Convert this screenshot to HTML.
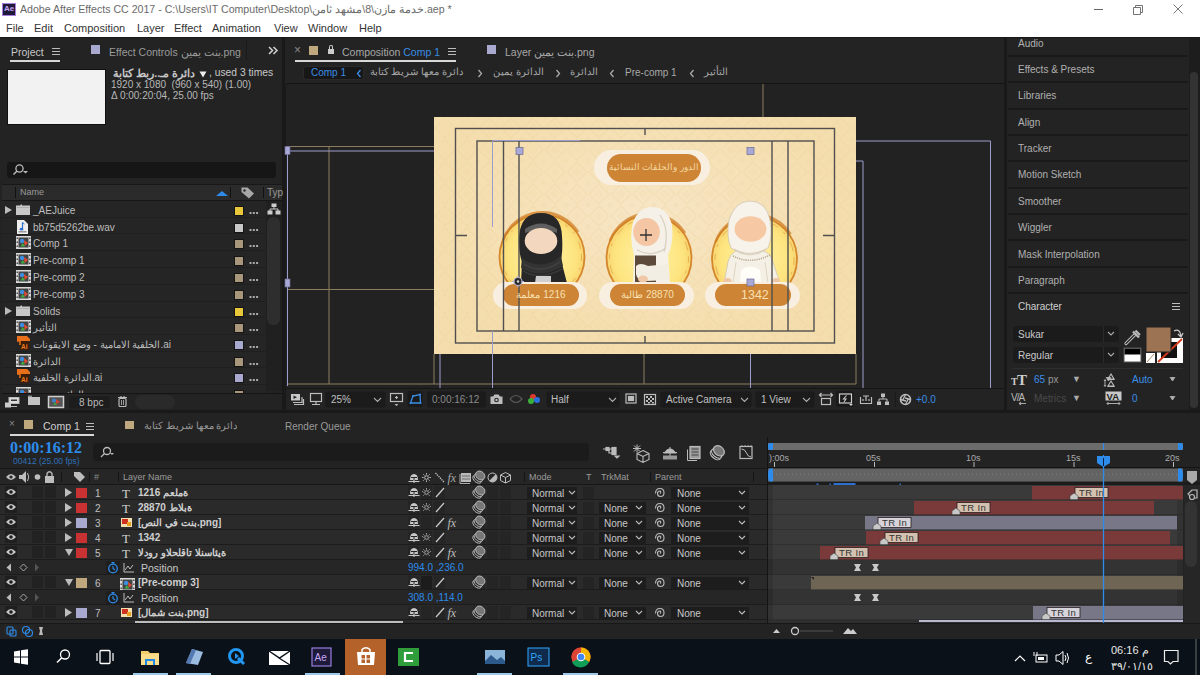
<!DOCTYPE html>
<html><head><meta charset="utf-8">
<style>
*{margin:0;padding:0;box-sizing:border-box}
html,body{width:1200px;height:675px;overflow:hidden;background:#191919;font-family:"Liberation Sans",sans-serif;font-size:11px;color:#b4b4b4}
.a{position:absolute}
.t{position:absolute;white-space:nowrap;line-height:1}
.panel{position:absolute;background:#232323}
</style></head><body>
<!-- title bar -->
<div class="a" style="left:0;top:0;width:1200px;height:37px;background:#fff"></div>
<div class="a" style="left:2px;top:3px;width:14px;height:13px;background:#1f1a3a;border:1px solid #a77dde"></div>
<div class="t" style="left:4px;top:5px;font-size:8px;color:#c9a7f7;font-weight:bold">Ae</div>
<div class="t" style="left:20px;top:4px;font-size:10.6px;color:#6a6a6a">Adobe After Effects CC 2017 - C:\Users\IT Computer\Desktop\<span style="unicode-bidi:isolate">مشهد ثامن</span>\8\<span style="unicode-bidi:isolate">خدمة مازن</span>.aep *</div>
<div class="t" style="left:6px;top:23px;font-size:11px;color:#333">File</div>
<div class="t" style="left:34px;top:23px;font-size:11px;color:#333">Edit</div>
<div class="t" style="left:64px;top:23px;font-size:11px;color:#333">Composition</div>
<div class="t" style="left:137px;top:23px;font-size:11px;color:#333">Layer</div>
<div class="t" style="left:174px;top:23px;font-size:11px;color:#333">Effect</div>
<div class="t" style="left:212px;top:23px;font-size:11px;color:#333">Animation</div>
<div class="t" style="left:274px;top:23px;font-size:11px;color:#333">View</div>
<div class="t" style="left:308px;top:23px;font-size:11px;color:#333">Window</div>
<div class="t" style="left:359px;top:23px;font-size:11px;color:#333">Help</div>
<!-- window controls -->
<svg class="a" style="left:1090px;top:2px" width="100" height="16"><path d="M4 7.5H13" stroke="#666" stroke-width="1"/><path d="M43.5 5.5H50.5V12.5H43.5Z M45.5 5.5V3.5H52.5V10.5H50.5" stroke="#666" fill="none" stroke-width=".9"/><path d="M83.5 2.5L92.5 11.5 M92.5 2.5L83.5 11.5" stroke="#666" stroke-width=".9"/></svg>



<!-- project panel -->
<div class="panel" style="left:0;top:38px;width:282px;height:372px"></div>

<!-- ===== PROJECT PANEL ===== -->
<div class="t" style="left:11px;top:47px;font-size:10.5px;color:#c8c8c8">Project</div>
<div class="a" style="left:52px;top:48px;width:8px;height:1px;background:#bbb;box-shadow:0 3px 0 #bbb,0 6px 0 #bbb"></div>
<div class="a" style="left:10px;top:60px;width:50px;height:2px;background:#d8d8d8"></div>
<div class="a" style="left:91px;top:45px;width:9px;height:9px;background:#a9a9d0"></div>
<div class="t" style="left:109px;top:47px;font-size:10.5px;color:#9a9a9a">Effect Controls بنت يمين.png</div>
<div class="a" style="left:246px;top:40px;width:1px;height:20px;background:#1a1a1a"></div>
<svg class="a" style="left:268px;top:46px" width="11" height="9"><path d="M1 1L4.5 4.5L1 8 M5.5 1L9 4.5L5.5 8" stroke="#ccc" stroke-width="1.6" fill="none"/></svg>
<div class="a" style="left:7px;top:69px;width:99px;height:56px;background:#f2f2f2;border:1px solid #111"></div>
<div class="t" style="left:111px;top:68px;width:84px;text-align:right;font-size:10.5px;color:#c8c8c8;font-weight:bold;direction:rtl">دائرة مـ..ربط كتابة</div><svg class="a" style="left:199px;top:71px" width="9" height="7"><path d="M0.5 0.5H7.5L4 6.5Z" fill="#eee"/></svg><div class="t" style="left:209px;top:68px;font-size:10.3px;color:#c8c8c8;white-space:pre">, used 3 times</div>
<div class="t" style="left:111px;top:80px;font-size:10px;color:#b8b8b8;white-space:pre">1920 x 1080  (960 x 540) (1.00)</div>
<div class="t" style="left:111px;top:91px;font-size:10px;color:#b8b8b8">Δ 0:00:20:04, 25.00 fps</div>
<div class="a" style="left:7px;top:162px;width:269px;height:16px;background:#161616;border-radius:3px"></div>
<svg class="a" style="left:12px;top:163px" width="20" height="14"><circle cx="7.5" cy="5.5" r="3.6" stroke="#bbb" stroke-width="1.3" fill="none"/><path d="M5 8L1.5 11.5" stroke="#bbb" stroke-width="1.4"/><path d="M11 8H16L13.5 10.5Z" fill="#bbb"/></svg>
<div class="a" style="left:2px;top:184px;width:280px;height:1px;background:#181818"></div>
<div class="a" style="left:2px;top:185px;width:264px;height:15px;background:#2b2b2b"></div>
<div class="a" style="left:266px;top:185px;width:16px;height:15px;background:#2b2b2b"></div>
<div class="a" style="left:15px;top:187px;width:1px;height:11px;background:#111"></div>
<div class="t" style="left:20px;top:188px;font-size:9px;color:#9a9a9a">Name</div>
<div class="a" style="left:216px;top:191px;width:0;height:0;border-left:6px solid transparent;border-right:6px solid transparent;border-bottom:5px solid #2d8ceb"></div>
<div class="a" style="left:230px;top:187px;width:1px;height:11px;background:#111"></div>
<svg class="a" style="left:240px;top:186px" width="16" height="13"><path d="M1.5 1.5H7.5L14 7.5L9 12.5L1.5 6Z" fill="#a8a8a8"/><circle cx="4.5" cy="4.5" r="1.2" fill="#2b2b2b"/></svg>
<div class="a" style="left:263px;top:187px;width:1px;height:11px;background:#111"></div>
<div class="t" style="left:267px;top:188px;font-size:10px;color:#9a9a9a">Typ</div>
<div class="a" style="left:2px;top:200px;width:280px;height:1px;background:#161616"></div>
<div class="a" style="left:2px;top:201px;width:264px;height:16px;background:#252525"></div><div class="a" style="left:2px;top:217px;width:264px;height:1px;background:#1f1f1f"></div><div class="a" style="left:5px;top:206px;width:0;height:0;border-top:4px solid transparent;border-bottom:4px solid transparent;border-left:7px solid #bbb"></div><svg class="a" style="left:16px;top:204px" width="14" height="11"><path d="M0 1.5H4L5 0.5H6V1.5H14V11H0Z" fill="#c8c8c8"/><path d="M0.5 3.5H13.5" stroke="#999" stroke-width=".6"/></svg><div class="t" style="left:33px;top:206px;font-size:10px;color:#bdbdbd">_AEJuice</div><div class="a" style="left:234px;top:206px;width:10px;height:10px;background:#e8c83a;border:1px solid #151515"></div><svg class="a" style="left:249px;top:212px" width="10" height="3"><rect x="0.5" y="0" width="2" height="2" fill="#aaa"/><rect x="3.8" y="0" width="2" height="2" fill="#aaa"/><rect x="7.1" y="0" width="2" height="2" fill="#aaa"/></svg><div class="a" style="left:2px;top:218px;width:264px;height:15px;background:#252525"></div><div class="a" style="left:2px;top:233px;width:264px;height:1px;background:#1f1f1f"></div><svg class="a" style="left:17px;top:220px" width="11" height="14"><path d="M0 0H7L11 4V14H0Z" fill="#eee"/><path d="M5.5 2.5V9" stroke="#2d6fd0" stroke-width="1.2"/><ellipse cx="4.5" cy="9.2" rx="1.8" ry="1.4" fill="#2d6fd0"/><path d="M5.5 2.5L7.5 4" stroke="#2d6fd0"/><rect x="1.5" y="11" width="8" height="1.5" fill="#999"/></svg><div class="t" style="left:33px;top:223px;font-size:10px;color:#bdbdbd">bb75d5262be.wav</div><div class="a" style="left:234px;top:223px;width:10px;height:10px;background:#c8c8c8;border:1px solid #151515"></div><svg class="a" style="left:249px;top:229px" width="10" height="3"><rect x="0.5" y="0" width="2" height="2" fill="#aaa"/><rect x="3.8" y="0" width="2" height="2" fill="#aaa"/><rect x="7.1" y="0" width="2" height="2" fill="#aaa"/></svg><div class="a" style="left:2px;top:234px;width:264px;height:16px;background:#252525"></div><div class="a" style="left:2px;top:250px;width:264px;height:1px;background:#1f1f1f"></div><svg class="a" style="left:16px;top:236px" width="15" height="13" viewBox="0 0 15 13"><rect x="0" y="0" width="15" height="13" fill="#d8d8d8"/><rect x="2.5" y="1.5" width="10" height="10" fill="#444"/><g fill="#333"><rect x="0.6" y="1.5" width="1.2" height="1.5"/><rect x="0.6" y="5.5" width="1.2" height="1.5"/><rect x="0.6" y="9.5" width="1.2" height="1.5"/><rect x="13.2" y="1.5" width="1.2" height="1.5"/><rect x="13.2" y="5.5" width="1.2" height="1.5"/><rect x="13.2" y="9.5" width="1.2" height="1.5"/></g><circle cx="6" cy="5" r="2.2" fill="#3d8de0"/><path d="M8 4L12 7L8.5 10Z" fill="#e04a30"/><path d="M4.5 10.5L6.8 7L9 10.5Z" fill="#3cb040"/></svg><div class="t" style="left:33px;top:239px;font-size:10px;color:#bdbdbd">Comp 1</div><div class="a" style="left:234px;top:239px;width:10px;height:10px;background:#a8977a;border:1px solid #151515"></div><svg class="a" style="left:249px;top:245px" width="10" height="3"><rect x="0.5" y="0" width="2" height="2" fill="#aaa"/><rect x="3.8" y="0" width="2" height="2" fill="#aaa"/><rect x="7.1" y="0" width="2" height="2" fill="#aaa"/></svg><div class="a" style="left:2px;top:251px;width:264px;height:16px;background:#252525"></div><div class="a" style="left:2px;top:267px;width:264px;height:1px;background:#1f1f1f"></div><svg class="a" style="left:16px;top:253px" width="15" height="13" viewBox="0 0 15 13"><rect x="0" y="0" width="15" height="13" fill="#d8d8d8"/><rect x="2.5" y="1.5" width="10" height="10" fill="#444"/><g fill="#333"><rect x="0.6" y="1.5" width="1.2" height="1.5"/><rect x="0.6" y="5.5" width="1.2" height="1.5"/><rect x="0.6" y="9.5" width="1.2" height="1.5"/><rect x="13.2" y="1.5" width="1.2" height="1.5"/><rect x="13.2" y="5.5" width="1.2" height="1.5"/><rect x="13.2" y="9.5" width="1.2" height="1.5"/></g><circle cx="6" cy="5" r="2.2" fill="#3d8de0"/><path d="M8 4L12 7L8.5 10Z" fill="#e04a30"/><path d="M4.5 10.5L6.8 7L9 10.5Z" fill="#3cb040"/></svg><div class="t" style="left:33px;top:256px;font-size:10px;color:#bdbdbd">Pre-comp 1</div><div class="a" style="left:234px;top:256px;width:10px;height:10px;background:#a8977a;border:1px solid #151515"></div><svg class="a" style="left:249px;top:262px" width="10" height="3"><rect x="0.5" y="0" width="2" height="2" fill="#aaa"/><rect x="3.8" y="0" width="2" height="2" fill="#aaa"/><rect x="7.1" y="0" width="2" height="2" fill="#aaa"/></svg><div class="a" style="left:2px;top:268px;width:264px;height:16px;background:#252525"></div><div class="a" style="left:2px;top:284px;width:264px;height:1px;background:#1f1f1f"></div><svg class="a" style="left:16px;top:270px" width="15" height="13" viewBox="0 0 15 13"><rect x="0" y="0" width="15" height="13" fill="#d8d8d8"/><rect x="2.5" y="1.5" width="10" height="10" fill="#444"/><g fill="#333"><rect x="0.6" y="1.5" width="1.2" height="1.5"/><rect x="0.6" y="5.5" width="1.2" height="1.5"/><rect x="0.6" y="9.5" width="1.2" height="1.5"/><rect x="13.2" y="1.5" width="1.2" height="1.5"/><rect x="13.2" y="5.5" width="1.2" height="1.5"/><rect x="13.2" y="9.5" width="1.2" height="1.5"/></g><circle cx="6" cy="5" r="2.2" fill="#3d8de0"/><path d="M8 4L12 7L8.5 10Z" fill="#e04a30"/><path d="M4.5 10.5L6.8 7L9 10.5Z" fill="#3cb040"/></svg><div class="t" style="left:33px;top:273px;font-size:10px;color:#bdbdbd">Pre-comp 2</div><div class="a" style="left:234px;top:273px;width:10px;height:10px;background:#a8977a;border:1px solid #151515"></div><svg class="a" style="left:249px;top:279px" width="10" height="3"><rect x="0.5" y="0" width="2" height="2" fill="#aaa"/><rect x="3.8" y="0" width="2" height="2" fill="#aaa"/><rect x="7.1" y="0" width="2" height="2" fill="#aaa"/></svg><div class="a" style="left:2px;top:285px;width:264px;height:16px;background:#252525"></div><div class="a" style="left:2px;top:301px;width:264px;height:1px;background:#1f1f1f"></div><svg class="a" style="left:16px;top:287px" width="15" height="13" viewBox="0 0 15 13"><rect x="0" y="0" width="15" height="13" fill="#d8d8d8"/><rect x="2.5" y="1.5" width="10" height="10" fill="#444"/><g fill="#333"><rect x="0.6" y="1.5" width="1.2" height="1.5"/><rect x="0.6" y="5.5" width="1.2" height="1.5"/><rect x="0.6" y="9.5" width="1.2" height="1.5"/><rect x="13.2" y="1.5" width="1.2" height="1.5"/><rect x="13.2" y="5.5" width="1.2" height="1.5"/><rect x="13.2" y="9.5" width="1.2" height="1.5"/></g><circle cx="6" cy="5" r="2.2" fill="#3d8de0"/><path d="M8 4L12 7L8.5 10Z" fill="#e04a30"/><path d="M4.5 10.5L6.8 7L9 10.5Z" fill="#3cb040"/></svg><div class="t" style="left:33px;top:290px;font-size:10px;color:#bdbdbd">Pre-comp 3</div><div class="a" style="left:234px;top:290px;width:10px;height:10px;background:#a8977a;border:1px solid #151515"></div><svg class="a" style="left:249px;top:296px" width="10" height="3"><rect x="0.5" y="0" width="2" height="2" fill="#aaa"/><rect x="3.8" y="0" width="2" height="2" fill="#aaa"/><rect x="7.1" y="0" width="2" height="2" fill="#aaa"/></svg><div class="a" style="left:2px;top:302px;width:264px;height:15px;background:#252525"></div><div class="a" style="left:2px;top:317px;width:264px;height:1px;background:#1f1f1f"></div><div class="a" style="left:5px;top:307px;width:0;height:0;border-top:4px solid transparent;border-bottom:4px solid transparent;border-left:7px solid #bbb"></div><svg class="a" style="left:16px;top:305px" width="14" height="11"><path d="M0 1.5H4L5 0.5H6V1.5H14V11H0Z" fill="#c8c8c8"/><path d="M0.5 3.5H13.5" stroke="#999" stroke-width=".6"/></svg><div class="t" style="left:33px;top:307px;font-size:10px;color:#bdbdbd">Solids</div><div class="a" style="left:234px;top:307px;width:10px;height:10px;background:#e8c83a;border:1px solid #151515"></div><svg class="a" style="left:249px;top:313px" width="10" height="3"><rect x="0.5" y="0" width="2" height="2" fill="#aaa"/><rect x="3.8" y="0" width="2" height="2" fill="#aaa"/><rect x="7.1" y="0" width="2" height="2" fill="#aaa"/></svg><div class="a" style="left:2px;top:318px;width:264px;height:16px;background:#252525"></div><div class="a" style="left:2px;top:334px;width:264px;height:1px;background:#1f1f1f"></div><svg class="a" style="left:16px;top:320px" width="15" height="13" viewBox="0 0 15 13"><rect x="0" y="0" width="15" height="13" fill="#d8d8d8"/><rect x="2.5" y="1.5" width="10" height="10" fill="#444"/><g fill="#333"><rect x="0.6" y="1.5" width="1.2" height="1.5"/><rect x="0.6" y="5.5" width="1.2" height="1.5"/><rect x="0.6" y="9.5" width="1.2" height="1.5"/><rect x="13.2" y="1.5" width="1.2" height="1.5"/><rect x="13.2" y="5.5" width="1.2" height="1.5"/><rect x="13.2" y="9.5" width="1.2" height="1.5"/></g><circle cx="6" cy="5" r="2.2" fill="#3d8de0"/><path d="M8 4L12 7L8.5 10Z" fill="#e04a30"/><path d="M4.5 10.5L6.8 7L9 10.5Z" fill="#3cb040"/></svg><div class="t" style="left:33px;top:323px;font-size:10px;color:#bdbdbd">التأثير</div><div class="a" style="left:234px;top:323px;width:10px;height:10px;background:#a8977a;border:1px solid #151515"></div><svg class="a" style="left:249px;top:329px" width="10" height="3"><rect x="0.5" y="0" width="2" height="2" fill="#aaa"/><rect x="3.8" y="0" width="2" height="2" fill="#aaa"/><rect x="7.1" y="0" width="2" height="2" fill="#aaa"/></svg><div class="a" style="left:2px;top:335px;width:264px;height:16px;background:#252525"></div><div class="a" style="left:2px;top:351px;width:264px;height:1px;background:#1f1f1f"></div><svg class="a" style="left:16px;top:336px" width="15" height="15"><path d="M1 0H11L14 3V5H1Z" fill="#e8701a"/><rect x="4" y="5" width="9" height="9" fill="#3a1c0a"/><path d="M1 5H4V9" stroke="#e8701a" stroke-width="1.5" fill="none"/><text x="5" y="12.5" font-family="Liberation Sans" font-size="6.5" font-weight="bold" fill="#f07a1a">Ai</text></svg><div class="t" style="left:33px;top:340px;font-size:10px;color:#bdbdbd">الخلفية الامامية - وضع  الايقونات.ai</div><div class="a" style="left:234px;top:340px;width:10px;height:10px;background:#a9a9d0;border:1px solid #151515"></div><svg class="a" style="left:249px;top:346px" width="10" height="3"><rect x="0.5" y="0" width="2" height="2" fill="#aaa"/><rect x="3.8" y="0" width="2" height="2" fill="#aaa"/><rect x="7.1" y="0" width="2" height="2" fill="#aaa"/></svg><div class="a" style="left:2px;top:352px;width:264px;height:15px;background:#252525"></div><div class="a" style="left:2px;top:367px;width:264px;height:1px;background:#1f1f1f"></div><svg class="a" style="left:16px;top:354px" width="15" height="13" viewBox="0 0 15 13"><rect x="0" y="0" width="15" height="13" fill="#d8d8d8"/><rect x="2.5" y="1.5" width="10" height="10" fill="#444"/><g fill="#333"><rect x="0.6" y="1.5" width="1.2" height="1.5"/><rect x="0.6" y="5.5" width="1.2" height="1.5"/><rect x="0.6" y="9.5" width="1.2" height="1.5"/><rect x="13.2" y="1.5" width="1.2" height="1.5"/><rect x="13.2" y="5.5" width="1.2" height="1.5"/><rect x="13.2" y="9.5" width="1.2" height="1.5"/></g><circle cx="6" cy="5" r="2.2" fill="#3d8de0"/><path d="M8 4L12 7L8.5 10Z" fill="#e04a30"/><path d="M4.5 10.5L6.8 7L9 10.5Z" fill="#3cb040"/></svg><div class="t" style="left:33px;top:357px;font-size:10px;color:#bdbdbd">الدائرة</div><div class="a" style="left:234px;top:357px;width:10px;height:10px;background:#a8977a;border:1px solid #151515"></div><svg class="a" style="left:249px;top:363px" width="10" height="3"><rect x="0.5" y="0" width="2" height="2" fill="#aaa"/><rect x="3.8" y="0" width="2" height="2" fill="#aaa"/><rect x="7.1" y="0" width="2" height="2" fill="#aaa"/></svg><div class="a" style="left:2px;top:368px;width:264px;height:16px;background:#252525"></div><div class="a" style="left:2px;top:384px;width:264px;height:1px;background:#1f1f1f"></div><svg class="a" style="left:16px;top:369px" width="15" height="15"><path d="M1 0H11L14 3V5H1Z" fill="#e8701a"/><rect x="4" y="5" width="9" height="9" fill="#3a1c0a"/><path d="M1 5H4V9" stroke="#e8701a" stroke-width="1.5" fill="none"/><text x="5" y="12.5" font-family="Liberation Sans" font-size="6.5" font-weight="bold" fill="#f07a1a">Ai</text></svg><div class="t" style="left:33px;top:373px;font-size:10px;color:#bdbdbd">الدائرة الخلفية.ai</div><div class="a" style="left:234px;top:373px;width:10px;height:10px;background:#a9a9d0;border:1px solid #151515"></div><svg class="a" style="left:249px;top:379px" width="10" height="3"><rect x="0.5" y="0" width="2" height="2" fill="#aaa"/><rect x="3.8" y="0" width="2" height="2" fill="#aaa"/><rect x="7.1" y="0" width="2" height="2" fill="#aaa"/></svg><div class="a" style="left:2px;top:385px;width:264px;height:16px;background:#252525"></div><div class="a" style="left:2px;top:401px;width:264px;height:1px;background:#1f1f1f"></div><svg class="a" style="left:16px;top:387px" width="15" height="13" viewBox="0 0 15 13"><rect x="0" y="0" width="15" height="13" fill="#d8d8d8"/><rect x="2.5" y="1.5" width="10" height="10" fill="#444"/><g fill="#333"><rect x="0.6" y="1.5" width="1.2" height="1.5"/><rect x="0.6" y="5.5" width="1.2" height="1.5"/><rect x="0.6" y="9.5" width="1.2" height="1.5"/><rect x="13.2" y="1.5" width="1.2" height="1.5"/><rect x="13.2" y="5.5" width="1.2" height="1.5"/><rect x="13.2" y="9.5" width="1.2" height="1.5"/></g><circle cx="6" cy="5" r="2.2" fill="#3d8de0"/><path d="M8 4L12 7L8.5 10Z" fill="#e04a30"/><path d="M4.5 10.5L6.8 7L9 10.5Z" fill="#3cb040"/></svg><div class="t" style="left:33px;top:390px;font-size:10px;color:#bdbdbd">الدائرة يمين</div><div class="a" style="left:234px;top:390px;width:10px;height:10px;background:#a8977a;border:1px solid #151515"></div><svg class="a" style="left:249px;top:396px" width="10" height="3"><rect x="0.5" y="0" width="2" height="2" fill="#aaa"/><rect x="3.8" y="0" width="2" height="2" fill="#aaa"/><rect x="7.1" y="0" width="2" height="2" fill="#aaa"/></svg><div class="a" style="left:266px;top:201px;width:16px;height:190px;background:#202020"></div><div class="a" style="left:267px;top:217px;width:13px;height:108px;background:#2e2e2e;border-radius:6px"></div><svg class="a" style="left:267px;top:203px" width="14" height="12"><rect x="4.5" y="0.5" width="5" height="3.5" fill="#ccc"/><rect x="0.5" y="7.5" width="5" height="4" fill="#ccc"/><rect x="8.5" y="7.5" width="5" height="4" fill="#ccc"/><path d="M7 4V6H3V8 M7 6H11V8" stroke="#ccc" fill="none"/></svg><div class="a" style="left:0;top:393px;width:282px;height:17px;background:#232323"></div>
<div class="a" style="left:2px;top:393px;width:280px;height:1px;background:#141414"></div>
<svg class="a" style="left:0;top:394px" width="282" height="16" viewBox="0 394 282 16">
 <rect x="9" y="397.5" width="10" height="6" fill="#ddd" stroke="#bbb"/><rect x="11" y="399.5" width="6" height="1.5" fill="#333"/>
 <path d="M5 402.5H11V407.5H5Z" fill="#ccc"/><path d="M11 406.5H17" stroke="#bbb"/>
 <rect x="28" y="397" width="12" height="8" fill="#c4c4c4"/><path d="M28 396.2H32" stroke="#c4c4c4"/>
 <rect x="48.5" y="396.5" width="15" height="11" fill="#555" stroke="#d0d0d0" stroke-width="1.5"/><circle cx="54" cy="400.5" r="2" fill="#3d80d0"/><path d="M56 399L60 402L56 404Z" fill="#d04030"/><path d="M53 405L55 402L57 405Z" fill="#40a040"/>
 <rect x="68.5" y="395.5" width="42" height="13.5" rx="3" fill="#1d1d1d" stroke="#262626"/>
 <path d="M118 397.5H127 M121 396V397.5 M124 396V397.5" stroke="#bbb" stroke-width="1.2"/><rect x="119" y="398.5" width="7" height="8" rx="1" fill="none" stroke="#bbb" stroke-width="1.2"/><path d="M121.5 400V405 M123.5 400V405" stroke="#bbb" stroke-width=".8"/>
 <rect x="135" y="395" width="40" height="14" rx="7" fill="#2a2a2a"/>
</svg>
<div class="t" style="left:79px;top:398px;font-size:10px;color:#bbb">8 bpc</div>

<!-- comp panel -->
<div class="panel" style="left:285px;top:38px;width:719px;height:372px"></div>

<!-- ===== COMP PANEL ===== -->
<div class="t" style="left:294px;top:44px;font-size:12px;color:#888">×</div>
<div class="a" style="left:309px;top:46px;width:9px;height:9px;background:#bfa77e"></div>
<div class="a" style="left:328px;top:49px;width:6px;height:5px;background:#ccc"></div>
<div class="a" style="left:329px;top:45px;width:4px;height:5px;border:1px solid #ccc;border-bottom:none;border-radius:2px 2px 0 0"></div>
<div class="t" style="left:342px;top:47px;font-size:10.5px;color:#a8a8a8">Composition <span style="color:#3a8ee6">Comp 1</span></div>
<div class="a" style="left:448px;top:48px;width:8px;height:1px;background:#bbb;box-shadow:0 3px 0 #bbb,0 6px 0 #bbb"></div>
<div class="a" style="left:295px;top:60px;width:161px;height:2px;background:#d8d8d8"></div>
<div class="a" style="left:487px;top:45px;width:9px;height:9px;background:#a9a9d0"></div>
<div class="t" style="left:505px;top:47px;font-size:10.5px;color:#a8a8a8">Layer بنت يمين.png</div>
<div class="a" style="left:286px;top:83px;width:718px;height:1px;background:#141414"></div>
<div class="a" style="left:303px;top:66px;width:61px;height:14px;background:#171717;border-radius:3px;border:1px solid #2a2a2a"></div>
<div class="t" style="left:311px;top:68px;font-size:10px;color:#3a8ee6">Comp 1</div>
<svg class="a" style="left:356px;top:69px" width="6" height="9"><path d="M4.5 1 L1.5 4.5 L4.5 8" stroke="#3a8ee6" stroke-width="1.3" fill="none"/></svg>
<div class="t" style="left:373px;top:67px;font-size:10px;color:#a8a8a8;width:90px;text-align:right;direction:rtl">دائرة معها شريط كتابة</div>
<svg class="a" style="left:477px;top:69px" width="6" height="9"><path d="M1.5 1 L4.5 4.5 L1.5 8" stroke="#aaa" stroke-width="1.3" fill="none"/></svg>
<div class="t" style="left:493px;top:67px;font-size:10px;color:#a8a8a8">الدائرة يمين</div>
<svg class="a" style="left:555px;top:69px" width="6" height="9"><path d="M1.5 1 L4.5 4.5 L1.5 8" stroke="#aaa" stroke-width="1.3" fill="none"/></svg>
<div class="t" style="left:570px;top:67px;font-size:10px;color:#a8a8a8">الدائرة</div>
<svg class="a" style="left:609px;top:69px" width="6" height="9"><path d="M4.5 1 L1.5 4.5 L4.5 8" stroke="#aaa" stroke-width="1.3" fill="none"/></svg>
<div class="t" style="left:625px;top:68px;font-size:10px;color:#a8a8a8">Pre-comp 1</div>
<svg class="a" style="left:689px;top:69px" width="6" height="9"><path d="M4.5 1 L1.5 4.5 L4.5 8" stroke="#aaa" stroke-width="1.3" fill="none"/></svg>
<div class="t" style="left:704px;top:67px;font-size:10px;color:#a8a8a8">التأثير</div>
<!-- viewer -->
<div class="a" style="left:285px;top:84px;width:719px;height:304px;background:#222222"></div>
<div class="a" style="left:285px;top:84px;width:1px;height:325px;background:#1a1a1a"></div>


<!-- ===== VIEWER CONTENT ===== -->
<div class="a" style="left:434px;top:117px;width:422px;height:237px;background:#f5deae;overflow:hidden">
  <div class="a" style="left:0;top:0;width:422px;height:237px;background:radial-gradient(ellipse 200px 120px at 211px 100px,#f7e6c6 0%,rgba(247,230,198,0) 100%)"></div>
  <svg class="a" style="left:0;top:0" width="422" height="237"><defs><pattern id="orn" width="22" height="22" patternUnits="userSpaceOnUse"><path d="M11 1L21 11L11 21L1 11Z" fill="none" stroke="#e9c990" stroke-width="1.3" opacity=".55"/><path d="M11 6L16 11L11 16L6 11Z" fill="#ecd09a" opacity=".35"/><circle cx="0" cy="0" r="2.5" fill="#ecd09a" opacity=".4"/><circle cx="22" cy="0" r="2.5" fill="#ecd09a" opacity=".4"/><circle cx="0" cy="22" r="2.5" fill="#ecd09a" opacity=".4"/><circle cx="22" cy="22" r="2.5" fill="#ecd09a" opacity=".4"/></pattern></defs><rect width="422" height="237" fill="url(#orn)" opacity=".42"/></svg>
</div>
<svg class="a" style="left:0;top:0" width="1200" height="675" viewBox="0 0 1200 675">

 <defs>
  <radialGradient id="cg" cx="50%" cy="50%" r="50%"><stop offset="0" stop-color="#fff2a8"/><stop offset=".8" stop-color="#fde47e"/><stop offset="1" stop-color="#f8d470"/></radialGradient>
 </defs>
 <g>
  <circle cx="542" cy="257" r="43" fill="url(#cg)"/>
  <circle cx="649" cy="258" r="43" fill="url(#cg)"/>
  <circle cx="754.5" cy="259" r="43" fill="url(#cg)"/>
  <g fill="none" stroke="#d07e24">
   <circle cx="542" cy="257" r="42.5" stroke-width="1.8" opacity=".9"/>
   <path d="M503 240A42 42 0 0 1 578 232" stroke-width="2.6" opacity=".75"/>
   <circle cx="542" cy="257" r="39.5" stroke-width="1" stroke-dasharray="4 7 2 9 8 5" opacity=".45"/>
   <circle cx="649" cy="258" r="42.5" stroke-width="1.8" opacity=".9"/>
   <path d="M610 241A42 42 0 0 1 685 233" stroke-width="2.6" opacity=".75"/>
   <circle cx="649" cy="258" r="39.5" stroke-width="1" stroke-dasharray="5 8 3 10 9 6" opacity=".45"/>
   <circle cx="754.5" cy="259" r="42.5" stroke-width="1.8" opacity=".9"/>
   <path d="M715.5 242A42 42 0 0 1 790.5 234" stroke-width="2.6" opacity=".75"/>
   <circle cx="754.5" cy="259" r="39.5" stroke-width="1" stroke-dasharray="6 7 3 9 10 6" opacity=".45"/>
  </g>
 </g>
 <!-- figure 1 black -->
 <g>
  <path d="M521 283 L522 262 Q518 250 519 236 Q521 213 541 213 Q561 213 562 236 Q563 250 561 260 L567 283 Z" fill="#272727"/>
  <path d="M522 258 Q541 272 561 256 L563 266 Q541 280 521 268Z" fill="#333"/>
  <path d="M524 264 Q541 275 560 262" stroke="#444" stroke-width="1.2" fill="none"/>
  <path d="M523 271 Q541 281 562 269" stroke="#3d3d3d" stroke-width="1.2" fill="none"/>
  <path d="M525 229 Q541 218 557 229 L557 233 Q541 226 525 233Z" fill="#5e5e5e"/>
  <ellipse cx="541" cy="241" rx="16.3" ry="13" fill="#f3d7be"/>
  <path d="M536 276 H551 V283 H535Z" fill="#cfcfcf"/>
 </g>
 <!-- figure 2 white w/ book -->
 <g>
  <path d="M633 283 L634 255 Q629 238 633 222 Q639 207 653 207 Q668 208 672 225 Q674 242 668 255 L670 283 Z" fill="#f5f1e8"/>
  <path d="M660 215 Q670 230 664 252" stroke="#d8d0c0" stroke-width="1.2" fill="none"/>
  <path d="M637 250 Q652 258 666 248" stroke="#d8d0c0" stroke-width="1.2" fill="none"/>
  <ellipse cx="646.5" cy="232" rx="13.3" ry="14" fill="#f4c6a4"/>
  <rect x="635" y="255.5" width="21" height="28" fill="#5e4a3a"/>
  <path d="M636 266 Q640 262 648 266 L668 264 L669 280 L646 281 Q637 281 636 274Z" fill="#f3eee4"/>
  <ellipse cx="643" cy="279" rx="5" ry="3.5" fill="#f0c8a8"/>
  <path d="M640 235 H652 M646 229 V241" stroke="#333" stroke-width="1.3"/>
 </g>
 <!-- figure 3 white -->
 <g>
  <path d="M724 283 L728 262 Q730 254 736 251 L764 251 Q771 254 773 262 L780 283 Z" fill="#f4f0e6" stroke="#cfc4b0" stroke-width=".8"/>
  <path d="M731 248 Q726 236 729 220 Q735 201 750 201 Q766 201 770 220 Q773 236 768 248 Q750 262 731 248Z" fill="#f7f3ea" stroke="#cfc4b0" stroke-width=".8"/>
  <path d="M734 249 Q750 258 766 249" stroke="#d6ccb8" stroke-width="1.2" fill="none"/>
  <path d="M733 256 Q750 265 770 255" stroke="#b8ab92" stroke-width="1.6" fill="none" stroke-dasharray="1.2 1"/>
  <path d="M741 270 Q750 263 760 270 L761 283 H740Z" fill="#fffdf7"/>
  <path d="M736 262 L733 283 M765 262 L768 283" stroke="#d8cdb8" stroke-width=".8"/>
  <ellipse cx="750.5" cy="229" rx="16" ry="12.7" fill="#f6c8a4"/>
  <ellipse cx="727.5" cy="281" rx="4" ry="3" fill="#efc6a4"/>
  <ellipse cx="776" cy="281" rx="4" ry="3" fill="#efc6a4"/>
 </g>
 <!-- pills -->
 <g>
  <rect x="594" y="150" width="116" height="35" rx="17.5" fill="#f9efe0"/>
  <rect x="607" y="154" width="94" height="28" rx="14" fill="#cd8435"/>
  <rect x="493" y="282" width="94" height="27" rx="13.5" fill="#f9efe0"/>
  <rect x="503" y="284" width="76" height="22" rx="11" fill="#cd8435"/>
  <rect x="599" y="282" width="95" height="27" rx="13.5" fill="#f9efe0"/>
  <rect x="610" y="284" width="75" height="22" rx="11" fill="#cd8435"/>
  <rect x="705" y="282" width="95" height="27" rx="13.5" fill="#f9efe0"/>
  <rect x="715" y="284" width="76" height="22" rx="11" fill="#cd8435"/>
 </g>
 <!-- comp guide lines (gray) -->
 <g stroke="#505050" stroke-width="1.4" fill="none">
  <rect x="455.5" y="128.5" width="379" height="214.5"/>
  <rect x="477" y="141" width="337" height="190"/>
  <path d="M503.5 141V331 M519 141V331 M772 141V331 M788 141V331"/>
  <path d="M645 128V135 M645 336V343 M456 235.5H467 M823 235.5H834"/>
 </g>
 <!-- tan lines -->
 <g stroke="#8c7d5e" stroke-width="1" fill="none">
  <path d="M287 146.5H434 M287 289.5H434 M287 384H856 M329 146V384 M434 354V384 M644 354V384 M856 354V384 M763 84V117"/>
 </g>
 <!-- purple lines -->
 <g stroke="#9d9dcc" stroke-width="1" fill="none">
  <path d="M287 151H434 M287.5 146V386 M440 354V388 M492.5 331V388 M750.5 354V388 M492.5 140.5H580 M492.5 141V227"/>
  <path d="M856 141H990.5V388 M856 161H863V388"/>
 </g>
 <!-- handles -->
 <g fill="#a9a9d8" stroke="#6a6a90" stroke-width=".7">
  <rect x="516" y="147.5" width="7" height="7"/>
  <rect x="747" y="147.5" width="7" height="7"/>
  <rect x="747" y="279" width="7" height="7"/>
  <rect x="285" y="146.5" width="5" height="8"/>
  <rect x="285" y="279" width="5" height="8"/>
 </g>
 <circle cx="518" cy="281.5" r="4" fill="#2a2a2a" stroke="#b0b0d0" stroke-width="1.2"/><path d="M518 275.5V278 M518 285V287.5 M512 281.5H514.5 M521.5 281.5H524" stroke="#b0b0d0" stroke-width="1"/><circle cx="518" cy="281.5" r="1.2" fill="#ddd"/>
</svg>
<div class="t" style="left:607px;top:163px;width:94px;text-align:center;font-size:9px;color:#f5d8a0;direction:rtl">الدور والحلقات النسائية</div>
<div class="t" style="left:503px;top:290px;width:76px;text-align:center;font-size:10px;color:#f8e0b0;direction:rtl">1216 معلمة</div>
<div class="t" style="left:610px;top:290px;width:75px;text-align:center;font-size:10px;color:#f8e0b0;direction:rtl">28870 طالبة</div>
<div class="t" style="left:741px;top:289px;font-size:12.5px;color:#f8e0b0">1342</div>

<!-- right panel -->
<div class="panel" style="left:1007px;top:38px;width:193px;height:372px"></div>

<!-- ===== COMP TOOLBAR ===== -->
<div class="a" style="left:285px;top:388px;width:719px;height:1px;background:#161616"></div>
<svg class="a" style="left:285px;top:389px" width="719" height="20" viewBox="285 389 719 20">
 <g fill="none" stroke="#bdbdbd" stroke-width="1.2">
  <rect x="291" y="394" width="9" height="6.5" fill="#c8c8c8" stroke="none"/><path d="M293.5 395.5L297 397.2L293.5 399Z" fill="#222" stroke="none"/><path d="M293 402.5H302V397 M294 404.5H303.5V399"/>
  <rect x="310.5" y="393.5" width="11" height="8"/><path d="M312 404.5H320 M316 402V404.5"/>
  <rect x="390.5" y="393.5" width="12" height="8"/><path d="M396.5 396V399 M395 397.5H398"/><path d="M394.5 404L396.5 406L398.5 404Z" fill="#bdbdbd" stroke="none"/>
  <path d="M490.5 396.5H493L494.5 394.5H498.5L500 396.5H502.5V404H490.5Z" fill="#bdbdbd" stroke="none"/><circle cx="496.5" cy="400" r="2.3" fill="#232323" stroke="none"/><circle cx="496.5" cy="400" r="1.2" fill="#bdbdbd" stroke="none"/>
  <path d="M510 399Q516 392 522 399Q516 406 510 399" stroke="#555"/>
  <rect x="626" y="394" width="10" height="9"/><rect x="628.5" y="396.5" width="5" height="4" fill="#bdbdbd"/>
  <rect x="644.5" y="394.5" width="11" height="10"/><g fill="#bdbdbd" stroke="none"><rect x="646" y="396" width="2" height="2"/><rect x="650" y="396" width="2" height="2"/><rect x="648" y="398" width="2" height="2"/><rect x="652" y="398" width="2" height="2"/><rect x="646" y="400" width="2" height="2"/><rect x="650" y="400" width="2" height="2"/><rect x="648" y="402" width="2" height="1.5"/><rect x="652" y="402" width="2" height="1.5"/></g>
  <rect x="821.5" y="398.5" width="9" height="6"/><path d="M819.5 395H832.5 M821.5 393L819.5 395L821.5 397 M830.5 393L832.5 395L830.5 397"/>
  
  <path d="M860.5 397V403.5H871.5V397 M863 399V401 M866 396V401 M869 399V401 M863 396H869"/>
  <rect x="881" y="393.5" width="4" height="3.5" fill="#bdbdbd" stroke="none"/><rect x="877" y="401.5" width="4" height="3.5" fill="#bdbdbd" stroke="none"/><rect x="885" y="401.5" width="4" height="3.5" fill="#bdbdbd" stroke="none"/><path d="M883 397V399H879V401.5 M883 399H887V401.5" stroke-width="1"/>
  <circle cx="905.5" cy="399.5" r="5" stroke-width="1.6"/><path d="M905.5 394.5L903 399.5 M910.5 399.5L905 398 M905.5 404.5L908 399.5 M900.5 399.5L906 401" stroke-width="1.3"/>
 </g>
 <rect x="407.5" y="391" width="15" height="16" fill="#1a1a1a" rx="2"/>
 <path d="M410.5 403L413 396L420 394.5L420.5 403Z" stroke="#3a8ee6" stroke-width="1.3" fill="none"/><g fill="#3a8ee6"><circle cx="410.5" cy="403" r="1"/><circle cx="413" cy="396" r="1"/><circle cx="420" cy="394.5" r="1"/><circle cx="420.5" cy="403" r="1"/></g>
 <rect x="836" y="391" width="18" height="16" fill="#1a1a1a" rx="2"/>
 <rect x="839.5" y="394" width="12" height="9" stroke="#cfcfcf" fill="none" stroke-width="1.2"/><path d="M846.5 395.5L843.5 399H846L844 402" stroke="#cfcfcf" fill="none" stroke-width="1.1"/><path d="M849 404L851 406L853 404Z" fill="#cfcfcf"/>
 <circle cx="533" cy="397" r="3" fill="#e03a2a"/><circle cx="537" cy="400" r="3" fill="#2a6fe0"/><circle cx="531" cy="401" r="3" fill="#3ab03a"/>
 <rect x="325.5" y="391.5" width="60" height="16" rx="2" fill="#1b1b1b"/>
 <rect x="427" y="391.5" width="59" height="16" rx="2" fill="#1b1b1b"/>
 <rect x="546.5" y="391.5" width="73" height="16" rx="2" fill="#1b1b1b"/>
 <rect x="660.5" y="391.5" width="91" height="16" rx="2" fill="#1b1b1b"/>
 <rect x="755.5" y="391.5" width="59" height="16" rx="2" fill="#1b1b1b"/>
 <g stroke="#aaa" stroke-width="1.1" fill="none">
  <path d="M374 398L377.5 401.5L381 398 M609 398L612.5 401.5L616 398 M741 398L744.5 401.5L748 398 M803 398L806.5 401.5L810 398"/>
 </g>
 <path d="M895.5 391V407" stroke="#1a1a1a"/>
 
</svg>
<div class="t" style="left:331px;top:395px;font-size:10px;color:#c0c0c0">25%</div>
<div class="t" style="left:432px;top:395px;font-size:10px;color:#8a8a8a">0:00:16:12</div>
<div class="t" style="left:551px;top:395px;font-size:10px;color:#c0c0c0">Half</div>
<div class="t" style="left:666px;top:395px;font-size:10px;color:#c0c0c0">Active Camera</div>
<div class="t" style="left:761px;top:395px;font-size:10px;color:#c0c0c0">1 View</div>
<div class="t" style="left:916px;top:395px;font-size:10px;color:#3a8ee6">+0.0</div>

<!-- ===== RIGHT PANEL ===== -->
<div class="a" style="left:1189px;top:38px;width:11px;height:372px;background:#1d1d1d"></div>
<div class="a" style="left:1190px;top:72px;width:8px;height:336px;background:#333;border-radius:4px"></div>
<div class="t" style="left:1018px;top:38.7px;font-size:10px;color:#b0b0b0">Audio</div>
<div class="a" style="left:1008px;top:55px;width:180px;height:2px;background:#191919"></div>
<div class="t" style="left:1018px;top:65.0px;font-size:10px;color:#b0b0b0">Effects &amp; Presets</div>
<div class="a" style="left:1008px;top:81px;width:180px;height:2px;background:#191919"></div>
<div class="t" style="left:1018px;top:91.4px;font-size:10px;color:#b0b0b0">Libraries</div>
<div class="a" style="left:1008px;top:108px;width:180px;height:2px;background:#191919"></div>
<div class="t" style="left:1018px;top:117.8px;font-size:10px;color:#b0b0b0">Align</div>
<div class="a" style="left:1008px;top:134px;width:180px;height:2px;background:#191919"></div>
<div class="t" style="left:1018px;top:144.1px;font-size:10px;color:#b0b0b0">Tracker</div>
<div class="a" style="left:1008px;top:160px;width:180px;height:2px;background:#191919"></div>
<div class="t" style="left:1018px;top:170.4px;font-size:10px;color:#b0b0b0">Motion Sketch</div>
<div class="a" style="left:1008px;top:187px;width:180px;height:2px;background:#191919"></div>
<div class="t" style="left:1018px;top:196.8px;font-size:10px;color:#b0b0b0">Smoother</div>
<div class="a" style="left:1008px;top:213px;width:180px;height:2px;background:#191919"></div>
<div class="t" style="left:1018px;top:223.2px;font-size:10px;color:#b0b0b0">Wiggler</div>
<div class="a" style="left:1008px;top:239px;width:180px;height:2px;background:#191919"></div>
<div class="t" style="left:1018px;top:249.5px;font-size:10px;color:#b0b0b0">Mask Interpolation</div>
<div class="a" style="left:1008px;top:266px;width:180px;height:2px;background:#191919"></div>
<div class="t" style="left:1018px;top:275.8px;font-size:10px;color:#b0b0b0">Paragraph</div>
<div class="a" style="left:1008px;top:292px;width:180px;height:2px;background:#191919"></div>
<div class="t" style="left:1018px;top:302.2px;font-size:10px;color:#d0d0d0">Character</div>

<div class="a" style="left:1172px;top:303px;width:8px;height:1px;background:#bbb;box-shadow:0 3px 0 #bbb,0 6px 0 #bbb"></div>
<div class="a" style="left:1013px;top:326px;width:106px;height:16px;background:#1b1b1b;border-radius:3px"></div>
<div class="a" style="left:1103px;top:326px;width:1px;height:16px;background:#2a2a2a"></div>
<div class="t" style="left:1018px;top:330px;font-size:10px;color:#c8c8c8">Sukar</div>
<div class="a" style="left:1013px;top:347px;width:106px;height:16px;background:#1b1b1b;border-radius:3px"></div>
<div class="a" style="left:1103px;top:347px;width:1px;height:16px;background:#2a2a2a"></div>
<div class="t" style="left:1018px;top:351px;font-size:10px;color:#c8c8c8">Regular</div>
<svg class="a" style="left:1000px;top:300px" width="200" height="115" viewBox="1000 300 200 115">
 <path d="M1108 332L1111 335L1114 332 M1108 353L1111 356L1114 353" stroke="#aaa" fill="none" stroke-width="1.1"/>
 <path d="M1126 343.5L1134.5 335" stroke="#bbb" stroke-width="3.2" stroke-linecap="round" fill="none"/><path d="M1126 343.5L1134.5 335" stroke="#232323" stroke-width="1.2" stroke-linecap="round" fill="none"/><path d="M1133 331.5L1139 337.5" stroke="#bbb" stroke-width="2.4" fill="none"/><path d="M1135.5 330.5L1140 335" stroke="#bbb" stroke-width="2" fill="none"/>
 <rect x="1124" y="348" width="17" height="14" fill="#fff" stroke="#555"/>
 <rect x="1124.5" y="348.5" width="16" height="6" fill="#000"/>
 <rect x="1157" y="338" width="26" height="25" fill="#fff"/>
 <rect x="1161" y="342" width="16" height="16" fill="#111"/>
 <path d="M1158 362L1182 339" stroke="#d63a1a" stroke-width="1.8"/>
 <rect x="1146" y="327" width="25" height="25" fill="#9c7454" stroke="#222"/>
 <rect x="1146" y="353" width="9" height="10" fill="#fff"/><path d="M1147 362L1154 354" stroke="#b0906a"/>
 <path d="M1174 331Q1180 328 1181 336 M1178 334L1181 337L1183 333" stroke="#ccc" fill="none" stroke-width="1.3"/>
 <path d="M1012 368.5H1183" stroke="#2e2e2e"/>
 <path d="M1106 377L1108.5 381L1111 377 M1106 396L1108.5 400L1111 396 M1170 377L1172.5 381L1175 377 M1170 396L1172.5 400L1175 396" stroke="#aaa" fill="#aaa"/>
</svg>
<svg class="a" style="left:1011px;top:372px" width="20" height="14"><text x="0" y="12.5" font-family="Liberation Serif" font-size="10" fill="#ccc" font-weight="bold">T</text><text x="6" y="12.5" font-family="Liberation Serif" font-size="15" fill="#ccc" font-weight="bold">T</text></svg>
<div class="t" style="left:1034px;top:375px;font-size:10px;color:#3a8ee6">65 <span style="color:#999">px</span></div>
<svg class="a" style="left:1103px;top:373px" width="18" height="15"><path d="M8 1L5 6H11Z M8 8L5 13H11Z" stroke="#bbb" fill="none" stroke-width="1.1"/><path d="M4.5 6.5H11.5 M4.5 13.5H11.5" stroke="#bbb"/><path d="M2 7V13 M1 8L2 6.5L3 8 M1 12L2 13.5L3 12" stroke="#bbb" fill="none" stroke-width=".9"/></svg>
<div class="t" style="left:1132px;top:375px;font-size:10px;color:#3a8ee6">Auto</div>
<svg class="a" style="left:1011px;top:391px" width="18" height="15"><text x="0" y="9.5" font-family="Liberation Sans" font-size="10" fill="#bbb" letter-spacing="-1">V/A</text><path d="M8 12.5H15 M10 11L8 12.5L10 14" stroke="#bbb" fill="none" stroke-width=".9"/></svg>
<div class="t" style="left:1034px;top:394px;font-size:10px;color:#4a4a4a">Metrics</div>
<svg class="a" style="left:1105px;top:391px" width="18" height="15"><rect x="0.5" y="0.5" width="16" height="9" fill="#c8c8c8"/><text x="1.5" y="9" font-family="Liberation Sans" font-size="9.5" font-weight="bold" fill="#222">VA</text><path d="M2 12.5H15 M3.5 11L2 12.5L3.5 14 M13.5 11L15 12.5L13.5 14" stroke="#bbb" fill="none" stroke-width=".9"/></svg>
<div class="t" style="left:1132px;top:394px;font-size:10px;color:#3a8ee6">0</div>
<div class="t" style="left:1072px;top:375px;font-size:9px;color:#aaa">▼</div>
<div class="t" style="left:1072px;top:394px;font-size:9px;color:#aaa">▼</div>

<!-- timeline panel -->
<div class="panel" style="left:0;top:413px;width:1200px;height:226px"></div>

<!-- ===== TIMELINE ===== -->
<div class="t" style="left:9px;top:419px;font-size:10px;color:#888">×</div>
<div class="a" style="left:24px;top:420px;width:9px;height:9px;background:#bfa77e"></div>
<div class="t" style="left:43px;top:421px;font-size:10.5px;color:#cfcfcf">Comp 1</div>
<div class="a" style="left:86px;top:423px;width:8px;height:1px;background:#bbb;box-shadow:0 3px 0 #bbb,0 6px 0 #bbb"></div>
<div class="a" style="left:10px;top:434px;width:84px;height:2px;background:#d8d8d8"></div>
<div class="a" style="left:125px;top:421px;width:9px;height:8px;background:#bfa77e"></div>
<div class="t" style="left:144px;top:421px;font-size:10px;color:#9a9a9a">دائرة معها شريط كتابة</div>
<div class="t" style="left:285px;top:421.5px;font-size:10px;color:#9a9a9a">Render Queue</div>
<div class="t" style="left:10px;top:440px;font-size:16px;color:#2d8ceb;font-weight:bold;font-family:'Liberation Serif',serif;letter-spacing:0px">0:00:16:12</div>
<div class="t" style="left:13px;top:457px;font-size:8.5px;color:#2f6fb8">00412 (25.00 fps)</div>
<div class="a" style="left:93px;top:443px;width:496px;height:18px;background:#1b1b1b;border-radius:4px"></div>
<svg class="a" style="left:97px;top:446px" width="20" height="12"><circle cx="10" cy="5" r="3.5" stroke="#bbb" stroke-width="1.3" fill="none"/><path d="M7.5 7.5L4 11" stroke="#bbb" stroke-width="1.3"/><path d="M13 7H17L15 9Z" fill="#bbb"/></svg>
<svg class="a" style="left:590px;top:440px" width="178" height="28" viewBox="590 440 178 28">
 <g stroke="#bbb" fill="none" stroke-width="1.2">
  <path d="M603 449H614 M609 449V453H614" stroke-width="1.2"/><rect x="606" y="447.5" width="3" height="3" fill="#bbb"/><rect x="612" y="447.5" width="4" height="3" fill="#bbb"/><rect x="612" y="451.5" width="4" height="3" fill="#bbb"/><path d="M615 456L617 458L619 456Z" fill="#bbb"/>
  <path d="M634 445.5L640 451.5 M640 445.5L634 451.5 M637 444.5V452.5 M633 448.5H641" stroke-width="1"/><path d="M643 450.5L649 453.5V459.5L643 462.5L637 459.5V453.5Z M637 453.5L643 456.5L649 453.5 M643 456.5V462.5" stroke-width="1.1"/>
  <path d="M664.5 453Q670 445 675.5 453Z" fill="#bbb"/><path d="M663 452.5H677 M670 447V459" stroke-width="1"/><rect x="663" y="455.5" width="14" height="4" fill="#999" stroke="none"/>
  <rect x="690" y="446.5" width="10" height="12" fill="#999"/><path d="M691.5 449H698.5 M691.5 452H698.5 M691.5 455H698.5" stroke="#333" stroke-width=".8"/><path d="M687.5 449.5V460.5H697" stroke-width="1"/>
  <g transform="rotate(40 718 452)"><ellipse cx="718" cy="456" rx="6" ry="3.5" fill="#232323"/><ellipse cx="718" cy="454" rx="6" ry="3.5" fill="#232323"/><ellipse cx="718" cy="450.5" rx="6" ry="4.5" fill="#777"/></g>
  <rect x="740" y="446.5" width="12" height="12"/><path d="M741.5 449Q745 449 746.5 453Q748 457 751 457" stroke-width="1"/><path d="M742 445V447 M745 445V447 M748 445V447 M751 445V447" stroke-width=".8"/>
 </g>
</svg>
<div class="a" style="left:0;top:468px;width:767px;height:1px;background:#171717"></div>
<div class="a" style="left:0;top:469px;width:767px;height:15px;background:#262626"></div>
<div class="a" style="left:0;top:484px;width:767px;height:1px;background:#171717"></div>
<svg class="a" style="left:0;top:469px" width="767" height="16" viewBox="0 469 767 16">
 <g fill="#bdbdbd">
  <path d="M6 477Q11 471 16 477Q11 483 6 477Z"/><circle cx="11" cy="477" r="1.6" fill="#262626"/>
  <path d="M19 475H22L26 471V483L22 479H19Z"/><path d="M27.5 473Q30 477 27.5 481" stroke="#bdbdbd" fill="none"/>
  <circle cx="37.5" cy="477" r="2.8"/>
  <rect x="45" y="476" width="9" height="7"/><path d="M47 476V473.5Q49.5 470 52 473.5V476" stroke="#bdbdbd" fill="none" stroke-width="1.3"/>
  <path d="M74 472H80L85 477L80 482L74 476Z"/>
 </g>
 <path d="M61.5 472V482 M89.5 472V482 M118.5 472V482 M524.5 472V482 M650.5 472V482 M753.5 472V482" stroke="#151515"/>
</svg>
<div class="t" style="left:94px;top:473px;font-size:9px;color:#8a8a8a">#</div>
<div class="t" style="left:123px;top:473px;font-size:9px;color:#9a9a9a">Layer Name</div>
<div class="t" style="left:529px;top:473px;font-size:9px;color:#9a9a9a">Mode</div>
<div class="t" style="left:586px;top:473px;font-size:9px;color:#9a9a9a">T</div>
<div class="t" style="left:601px;top:473px;font-size:9px;color:#9a9a9a">TrkMat</div>
<div class="t" style="left:655px;top:473px;font-size:9px;color:#9a9a9a">Parent</div>
<svg class="a" style="left:400px;top:469px" width="120" height="16" viewBox="400 469 120 16"><path d="M410 480Q410 474 414 474Q418 474 418 480Z" fill="#c8c8c8"/><path d="M411 477.5H417 M414 477V482" stroke="#262626" stroke-width="1"/><path d="M408.5 481.5H419.5" stroke="#c8c8c8" stroke-width="1.1"/><path d="M414 480V483" stroke="#c8c8c8" stroke-width="1.1"/><circle cx="426.5" cy="477.5" r="1.8" fill="none" stroke="#bdbdbd" stroke-width="1"/><path d="M429.3 477.5L431.0 477.5" stroke="#bdbdbd" stroke-width=".9"/><path d="M428.5 479.5L429.7 480.7" stroke="#bdbdbd" stroke-width=".9"/><path d="M426.5 480.3L426.5 482.0" stroke="#bdbdbd" stroke-width=".9"/><path d="M424.5 479.5L423.3 480.7" stroke="#bdbdbd" stroke-width=".9"/><path d="M423.7 477.5L422.0 477.5" stroke="#bdbdbd" stroke-width=".9"/><path d="M424.5 475.5L423.3 474.3" stroke="#bdbdbd" stroke-width=".9"/><path d="M426.5 474.7L426.5 473.0" stroke="#bdbdbd" stroke-width=".9"/><path d="M428.5 475.5L429.7 474.3" stroke="#bdbdbd" stroke-width=".9"/><path d="M435.5 473L444 482" stroke="#c8c8c8" stroke-width="1.3" stroke-dasharray="1.3 .9"/><text x="447.5" y="482" font-family="Liberation Serif" font-style="italic" font-size="12" fill="#a8a8a8">fx</text><rect x="461" y="473" width="10" height="9" fill="#bbb"/><path d="M462 476H470 M462 479H470" stroke="#555" stroke-width=".8"/><path d="M460 474V483.5H470" stroke="#bbb" fill="none" stroke-width=".9"/><g transform="rotate(40 479 477)"><ellipse cx="479" cy="480" rx="5" ry="3" fill="#2a2a2a" stroke="#bbb" stroke-width=".9"/><ellipse cx="479" cy="478" rx="5" ry="3" fill="#2a2a2a" stroke="#bbb" stroke-width=".9"/><ellipse cx="479" cy="475" rx="5" ry="4" fill="#777" stroke="#bbb" stroke-width=".9"/></g><circle cx="492.5" cy="477.5" r="4.5" fill="#bbb"/><path d="M489.3 480.7A4.5 4.5 0 0 1 495.7 474.3Z" fill="#262626"/><circle cx="492.5" cy="477.5" r="4.5" fill="none" stroke="#bbb" stroke-width="1"/><path d="M505.5 472.5L510.5 475V480.5L505.5 483L500.5 480.5V475Z M500.5 475L505.5 477.5L510.5 475 M505.5 477.5V483" stroke="#bbb" fill="none" stroke-width="1"/></svg>
<div class="a" style="left:0;top:485px;width:767px;height:14px;background:#2a2a2a"></div><div class="a" style="left:0;top:499px;width:767px;height:1px;background:#1c1c1c"></div><div class="a" style="left:5px;top:486px;width:12px;height:12px;background:#1f1f1f"></div><svg class="a" style="left:5px;top:486px" width="12" height="12"><path d="M1 6Q6 0 11 6Q6 12 1 6Z" fill="#c8c8c8"/><circle cx="6" cy="6" r="1.8" fill="#1f1f1f"/></svg><div class="a" style="left:32px;top:486px;width:11px;height:12px;background:#222"></div><div class="a" style="left:45px;top:486px;width:11px;height:12px;background:#222"></div><svg class="a" style="left:65px;top:488px" width="8" height="9"><path d="M0 0L7 4.5L0 9Z" fill="#bdbdbd"/></svg><div class="a" style="left:76px;top:488px;width:11px;height:10px;background:#c83232"></div><div class="t" style="left:95px;top:489px;font-size:10px;color:#c0c0c0">1</div><div class="t" style="left:122px;top:487px;font-size:13px;color:#d0d0d0;font-family:'Liberation Serif',serif">T</div><div class="t" style="left:138px;top:488px;font-size:10px;color:#cfcfcf;font-weight:bold">1216 ةملعم</div><svg class="a" style="left:405px;top:485px" width="120" height="15" viewBox="405 485 120 15"><rect x="408" y="486" width="11" height="13" fill="#252525"/><rect x="421" y="486" width="11" height="13" fill="#252525"/><rect x="434" y="486" width="11" height="13" fill="#252525"/><rect x="447" y="486" width="11" height="13" fill="#2a2a2a"/><rect x="473" y="486" width="12" height="13" fill="#252525"/><rect x="487" y="486" width="11" height="13" fill="#252525"/><rect x="500" y="486" width="11" height="13" fill="#252525"/><path d="M410 494Q410 488 414 488Q418 488 418 494Z" fill="#c8c8c8"/><path d="M411 491.5H417 M414 491V496" stroke="#262626" stroke-width="1"/><path d="M408.5 495.5H419.5" stroke="#c8c8c8" stroke-width="1.1"/><path d="M414 494V497" stroke="#c8c8c8" stroke-width="1.1"/><circle cx="426.5" cy="492.5" r="1.8" fill="none" stroke="#a8a8a8" stroke-width="1"/><path d="M429.3 492.5L431.0 491" stroke="#a8a8a8" stroke-width=".9"/><path d="M428.5 494.5L429.7 495.7" stroke="#a8a8a8" stroke-width=".9"/><path d="M426.5 495.3L426.5 495.5" stroke="#a8a8a8" stroke-width=".9"/><path d="M424.5 494.5L423.3 495.7" stroke="#a8a8a8" stroke-width=".9"/><path d="M423.7 492.5L422.0 491" stroke="#a8a8a8" stroke-width=".9"/><path d="M424.5 490.5L423.3 489.3" stroke="#a8a8a8" stroke-width=".9"/><path d="M426.5 489.7L426.5 488.0" stroke="#a8a8a8" stroke-width=".9"/><path d="M428.5 490.5L429.7 489.3" stroke="#a8a8a8" stroke-width=".9"/><path d="M436 497L444 488" stroke="#c8c8c8" stroke-width="1.3"/><g transform="rotate(40 479 492)"><ellipse cx="479" cy="495" rx="5" ry="3" fill="#2a2a2a" stroke="#bbb" stroke-width=".9"/><ellipse cx="479" cy="493" rx="5" ry="3" fill="#2a2a2a" stroke="#bbb" stroke-width=".9"/><ellipse cx="479" cy="490" rx="5" ry="4" fill="#777" stroke="#bbb" stroke-width=".9"/></g></svg><div class="a" style="left:527px;top:487px;width:50px;height:12px;background:#1d1d1d"></div><div class="t" style="left:532px;top:489px;font-size:10px;color:#c8c8c8">Normal</div><svg class="a" style="left:568px;top:490px" width="8" height="6"><path d="M1 1L4 4L7 1" stroke="#bbb" fill="none" stroke-width="1.1"/></svg><div class="a" style="left:583px;top:487px;width:11px;height:12px;background:#242424"></div><svg class="a" style="left:654px;top:487px" width="12" height="12"><path d="M6 6.5Q7.5 5 6 4Q3.5 4 3.5 6.5Q3.5 9.5 6.5 9.5Q10 9.5 10 6Q10 1.5 6 1.5Q1.5 1.5 1.5 6.5" stroke="#bbb" fill="none" stroke-width="1.1"/></svg><div class="a" style="left:671px;top:487px;width:78px;height:12px;background:#1d1d1d"></div><div class="t" style="left:677px;top:489px;font-size:10px;color:#c8c8c8">None</div><svg class="a" style="left:738px;top:490px" width="8" height="6"><path d="M1 1L4 4L7 1" stroke="#bbb" fill="none" stroke-width="1.1"/></svg><div class="a" style="left:0;top:500px;width:767px;height:14px;background:#2a2a2a"></div><div class="a" style="left:0;top:514px;width:767px;height:1px;background:#1c1c1c"></div><div class="a" style="left:5px;top:501px;width:12px;height:12px;background:#1f1f1f"></div><svg class="a" style="left:5px;top:501px" width="12" height="12"><path d="M1 6Q6 0 11 6Q6 12 1 6Z" fill="#c8c8c8"/><circle cx="6" cy="6" r="1.8" fill="#1f1f1f"/></svg><div class="a" style="left:32px;top:501px;width:11px;height:12px;background:#222"></div><div class="a" style="left:45px;top:501px;width:11px;height:12px;background:#222"></div><svg class="a" style="left:65px;top:503px" width="8" height="9"><path d="M0 0L7 4.5L0 9Z" fill="#bdbdbd"/></svg><div class="a" style="left:76px;top:503px;width:11px;height:10px;background:#c83232"></div><div class="t" style="left:95px;top:504px;font-size:10px;color:#c0c0c0">2</div><div class="t" style="left:122px;top:502px;font-size:13px;color:#d0d0d0;font-family:'Liberation Serif',serif">T</div><div class="t" style="left:138px;top:503px;font-size:10px;color:#cfcfcf;font-weight:bold">28870 ةبلاط</div><svg class="a" style="left:405px;top:500px" width="120" height="15" viewBox="405 500 120 15"><rect x="408" y="501" width="11" height="13" fill="#252525"/><rect x="421" y="501" width="11" height="13" fill="#252525"/><rect x="434" y="501" width="11" height="13" fill="#252525"/><rect x="447" y="501" width="11" height="13" fill="#2a2a2a"/><rect x="473" y="501" width="12" height="13" fill="#252525"/><rect x="487" y="501" width="11" height="13" fill="#252525"/><rect x="500" y="501" width="11" height="13" fill="#252525"/><path d="M410 509Q410 503 414 503Q418 503 418 509Z" fill="#c8c8c8"/><path d="M411 506.5H417 M414 506V511" stroke="#262626" stroke-width="1"/><path d="M408.5 510.5H419.5" stroke="#c8c8c8" stroke-width="1.1"/><path d="M414 509V512" stroke="#c8c8c8" stroke-width="1.1"/><circle cx="426.5" cy="507.5" r="1.8" fill="none" stroke="#a8a8a8" stroke-width="1"/><path d="M429.3 507.5L431.0 506" stroke="#a8a8a8" stroke-width=".9"/><path d="M428.5 509.5L429.7 510.7" stroke="#a8a8a8" stroke-width=".9"/><path d="M426.5 510.3L426.5 510.5" stroke="#a8a8a8" stroke-width=".9"/><path d="M424.5 509.5L423.3 510.7" stroke="#a8a8a8" stroke-width=".9"/><path d="M423.7 507.5L422.0 506" stroke="#a8a8a8" stroke-width=".9"/><path d="M424.5 505.5L423.3 504.3" stroke="#a8a8a8" stroke-width=".9"/><path d="M426.5 504.7L426.5 503.0" stroke="#a8a8a8" stroke-width=".9"/><path d="M428.5 505.5L429.7 504.3" stroke="#a8a8a8" stroke-width=".9"/><path d="M436 512L444 503" stroke="#c8c8c8" stroke-width="1.3"/><g transform="rotate(40 479 507)"><ellipse cx="479" cy="510" rx="5" ry="3" fill="#2a2a2a" stroke="#bbb" stroke-width=".9"/><ellipse cx="479" cy="508" rx="5" ry="3" fill="#2a2a2a" stroke="#bbb" stroke-width=".9"/><ellipse cx="479" cy="505" rx="5" ry="4" fill="#777" stroke="#bbb" stroke-width=".9"/></g></svg><div class="a" style="left:527px;top:502px;width:50px;height:12px;background:#1d1d1d"></div><div class="t" style="left:532px;top:504px;font-size:10px;color:#c8c8c8">Normal</div><svg class="a" style="left:568px;top:505px" width="8" height="6"><path d="M1 1L4 4L7 1" stroke="#bbb" fill="none" stroke-width="1.1"/></svg><div class="a" style="left:583px;top:502px;width:11px;height:12px;background:#242424"></div><div class="a" style="left:599px;top:502px;width:47px;height:12px;background:#1d1d1d"></div><div class="t" style="left:604px;top:504px;font-size:10px;color:#c8c8c8">None</div><svg class="a" style="left:635px;top:505px" width="8" height="6"><path d="M1 1L4 4L7 1" stroke="#bbb" fill="none" stroke-width="1.1"/></svg><svg class="a" style="left:654px;top:502px" width="12" height="12"><path d="M6 6.5Q7.5 5 6 4Q3.5 4 3.5 6.5Q3.5 9.5 6.5 9.5Q10 9.5 10 6Q10 1.5 6 1.5Q1.5 1.5 1.5 6.5" stroke="#bbb" fill="none" stroke-width="1.1"/></svg><div class="a" style="left:671px;top:502px;width:78px;height:12px;background:#1d1d1d"></div><div class="t" style="left:677px;top:504px;font-size:10px;color:#c8c8c8">None</div><svg class="a" style="left:738px;top:505px" width="8" height="6"><path d="M1 1L4 4L7 1" stroke="#bbb" fill="none" stroke-width="1.1"/></svg><div class="a" style="left:0;top:515px;width:767px;height:14px;background:#2a2a2a"></div><div class="a" style="left:0;top:529px;width:767px;height:1px;background:#1c1c1c"></div><div class="a" style="left:5px;top:516px;width:12px;height:12px;background:#1f1f1f"></div><svg class="a" style="left:5px;top:516px" width="12" height="12"><path d="M1 6Q6 0 11 6Q6 12 1 6Z" fill="#c8c8c8"/><circle cx="6" cy="6" r="1.8" fill="#1f1f1f"/></svg><div class="a" style="left:32px;top:516px;width:11px;height:12px;background:#222"></div><div class="a" style="left:45px;top:516px;width:11px;height:12px;background:#222"></div><svg class="a" style="left:65px;top:518px" width="8" height="9"><path d="M0 0L7 4.5L0 9Z" fill="#bdbdbd"/></svg><div class="a" style="left:76px;top:518px;width:11px;height:10px;background:#a9a9d0"></div><div class="t" style="left:95px;top:519px;font-size:10px;color:#c0c0c0">3</div><div class="a" style="left:121px;top:518px;width:11px;height:9px;background:#f0e0b0"></div><div class="a" style="left:122px;top:519px;width:6px;height:5px;background:#d03020"></div><div class="a" style="left:127px;top:522px;width:4px;height:4px;background:#e8a020"></div><div class="t" style="left:138px;top:518px;font-size:10px;color:#cfcfcf;font-weight:bold">[بنت في النص.png]</div><svg class="a" style="left:405px;top:515px" width="120" height="15" viewBox="405 515 120 15"><rect x="408" y="516" width="11" height="13" fill="#252525"/><rect x="421" y="516" width="11" height="13" fill="#252525"/><rect x="434" y="516" width="11" height="13" fill="#252525"/><rect x="447" y="516" width="11" height="13" fill="#2a2a2a"/><rect x="473" y="516" width="12" height="13" fill="#252525"/><rect x="487" y="516" width="11" height="13" fill="#252525"/><rect x="500" y="516" width="11" height="13" fill="#252525"/><path d="M410 524Q410 518 414 518Q418 518 418 524Z" fill="#c8c8c8"/><path d="M411 521.5H417 M414 521V526" stroke="#262626" stroke-width="1"/><path d="M408.5 525.5H419.5" stroke="#c8c8c8" stroke-width="1.1"/><path d="M414 524V527" stroke="#c8c8c8" stroke-width="1.1"/><path d="M436 527L444 518" stroke="#c8c8c8" stroke-width="1.3"/><text x="447.5" y="526.5" font-family="Liberation Serif" font-style="italic" font-size="12" fill="#bdbdbd">fx</text><g transform="rotate(40 479 522)"><ellipse cx="479" cy="525" rx="5" ry="3" fill="#2a2a2a" stroke="#bbb" stroke-width=".9"/><ellipse cx="479" cy="523" rx="5" ry="3" fill="#2a2a2a" stroke="#bbb" stroke-width=".9"/><ellipse cx="479" cy="520" rx="5" ry="4" fill="#777" stroke="#bbb" stroke-width=".9"/></g></svg><div class="a" style="left:527px;top:517px;width:50px;height:12px;background:#1d1d1d"></div><div class="t" style="left:532px;top:519px;font-size:10px;color:#c8c8c8">Normal</div><svg class="a" style="left:568px;top:520px" width="8" height="6"><path d="M1 1L4 4L7 1" stroke="#bbb" fill="none" stroke-width="1.1"/></svg><div class="a" style="left:583px;top:517px;width:11px;height:12px;background:#242424"></div><div class="a" style="left:599px;top:517px;width:47px;height:12px;background:#1d1d1d"></div><div class="t" style="left:604px;top:519px;font-size:10px;color:#c8c8c8">None</div><svg class="a" style="left:635px;top:520px" width="8" height="6"><path d="M1 1L4 4L7 1" stroke="#bbb" fill="none" stroke-width="1.1"/></svg><svg class="a" style="left:654px;top:517px" width="12" height="12"><path d="M6 6.5Q7.5 5 6 4Q3.5 4 3.5 6.5Q3.5 9.5 6.5 9.5Q10 9.5 10 6Q10 1.5 6 1.5Q1.5 1.5 1.5 6.5" stroke="#bbb" fill="none" stroke-width="1.1"/></svg><div class="a" style="left:671px;top:517px;width:78px;height:12px;background:#1d1d1d"></div><div class="t" style="left:677px;top:519px;font-size:10px;color:#c8c8c8">None</div><svg class="a" style="left:738px;top:520px" width="8" height="6"><path d="M1 1L4 4L7 1" stroke="#bbb" fill="none" stroke-width="1.1"/></svg><div class="a" style="left:0;top:530px;width:767px;height:14px;background:#2a2a2a"></div><div class="a" style="left:0;top:544px;width:767px;height:1px;background:#1c1c1c"></div><div class="a" style="left:5px;top:531px;width:12px;height:12px;background:#1f1f1f"></div><svg class="a" style="left:5px;top:531px" width="12" height="12"><path d="M1 6Q6 0 11 6Q6 12 1 6Z" fill="#c8c8c8"/><circle cx="6" cy="6" r="1.8" fill="#1f1f1f"/></svg><div class="a" style="left:32px;top:531px;width:11px;height:12px;background:#222"></div><div class="a" style="left:45px;top:531px;width:11px;height:12px;background:#222"></div><svg class="a" style="left:65px;top:533px" width="8" height="9"><path d="M0 0L7 4.5L0 9Z" fill="#bdbdbd"/></svg><div class="a" style="left:76px;top:533px;width:11px;height:10px;background:#c83232"></div><div class="t" style="left:95px;top:534px;font-size:10px;color:#c0c0c0">4</div><div class="t" style="left:122px;top:532px;font-size:13px;color:#d0d0d0;font-family:'Liberation Serif',serif">T</div><div class="t" style="left:138px;top:533px;font-size:10px;color:#cfcfcf;font-weight:bold">1342</div><svg class="a" style="left:405px;top:530px" width="120" height="15" viewBox="405 530 120 15"><rect x="408" y="531" width="11" height="13" fill="#252525"/><rect x="421" y="531" width="11" height="13" fill="#252525"/><rect x="434" y="531" width="11" height="13" fill="#252525"/><rect x="447" y="531" width="11" height="13" fill="#2a2a2a"/><rect x="473" y="531" width="12" height="13" fill="#252525"/><rect x="487" y="531" width="11" height="13" fill="#252525"/><rect x="500" y="531" width="11" height="13" fill="#252525"/><path d="M410 539Q410 533 414 533Q418 533 418 539Z" fill="#c8c8c8"/><path d="M411 536.5H417 M414 536V541" stroke="#262626" stroke-width="1"/><path d="M408.5 540.5H419.5" stroke="#c8c8c8" stroke-width="1.1"/><path d="M414 539V542" stroke="#c8c8c8" stroke-width="1.1"/><circle cx="426.5" cy="537.5" r="1.8" fill="none" stroke="#a8a8a8" stroke-width="1"/><path d="M429.3 537.5L431.0 536" stroke="#a8a8a8" stroke-width=".9"/><path d="M428.5 539.5L429.7 540.7" stroke="#a8a8a8" stroke-width=".9"/><path d="M426.5 540.3L426.5 540.5" stroke="#a8a8a8" stroke-width=".9"/><path d="M424.5 539.5L423.3 540.7" stroke="#a8a8a8" stroke-width=".9"/><path d="M423.7 537.5L422.0 536" stroke="#a8a8a8" stroke-width=".9"/><path d="M424.5 535.5L423.3 534.3" stroke="#a8a8a8" stroke-width=".9"/><path d="M426.5 534.7L426.5 533.0" stroke="#a8a8a8" stroke-width=".9"/><path d="M428.5 535.5L429.7 534.3" stroke="#a8a8a8" stroke-width=".9"/><path d="M436 542L444 533" stroke="#c8c8c8" stroke-width="1.3"/><g transform="rotate(40 479 537)"><ellipse cx="479" cy="540" rx="5" ry="3" fill="#2a2a2a" stroke="#bbb" stroke-width=".9"/><ellipse cx="479" cy="538" rx="5" ry="3" fill="#2a2a2a" stroke="#bbb" stroke-width=".9"/><ellipse cx="479" cy="535" rx="5" ry="4" fill="#777" stroke="#bbb" stroke-width=".9"/></g></svg><div class="a" style="left:527px;top:532px;width:50px;height:12px;background:#1d1d1d"></div><div class="t" style="left:532px;top:534px;font-size:10px;color:#c8c8c8">Normal</div><svg class="a" style="left:568px;top:535px" width="8" height="6"><path d="M1 1L4 4L7 1" stroke="#bbb" fill="none" stroke-width="1.1"/></svg><div class="a" style="left:583px;top:532px;width:11px;height:12px;background:#242424"></div><div class="a" style="left:599px;top:532px;width:47px;height:12px;background:#1d1d1d"></div><div class="t" style="left:604px;top:534px;font-size:10px;color:#c8c8c8">None</div><svg class="a" style="left:635px;top:535px" width="8" height="6"><path d="M1 1L4 4L7 1" stroke="#bbb" fill="none" stroke-width="1.1"/></svg><svg class="a" style="left:654px;top:532px" width="12" height="12"><path d="M6 6.5Q7.5 5 6 4Q3.5 4 3.5 6.5Q3.5 9.5 6.5 9.5Q10 9.5 10 6Q10 1.5 6 1.5Q1.5 1.5 1.5 6.5" stroke="#bbb" fill="none" stroke-width="1.1"/></svg><div class="a" style="left:671px;top:532px;width:78px;height:12px;background:#1d1d1d"></div><div class="t" style="left:677px;top:534px;font-size:10px;color:#c8c8c8">None</div><svg class="a" style="left:738px;top:535px" width="8" height="6"><path d="M1 1L4 4L7 1" stroke="#bbb" fill="none" stroke-width="1.1"/></svg><div class="a" style="left:0;top:545px;width:767px;height:14px;background:#2a2a2a"></div><div class="a" style="left:0;top:559px;width:767px;height:1px;background:#1c1c1c"></div><div class="a" style="left:5px;top:546px;width:12px;height:12px;background:#1f1f1f"></div><svg class="a" style="left:5px;top:546px" width="12" height="12"><path d="M1 6Q6 0 11 6Q6 12 1 6Z" fill="#c8c8c8"/><circle cx="6" cy="6" r="1.8" fill="#1f1f1f"/></svg><div class="a" style="left:32px;top:546px;width:11px;height:12px;background:#222"></div><div class="a" style="left:45px;top:546px;width:11px;height:12px;background:#222"></div><svg class="a" style="left:65px;top:549px" width="9" height="8"><path d="M0 0H8L4 7Z" fill="#bdbdbd"/></svg><div class="a" style="left:76px;top:548px;width:11px;height:10px;background:#c83232"></div><div class="t" style="left:95px;top:549px;font-size:10px;color:#c0c0c0">5</div><div class="t" style="left:122px;top:547px;font-size:13px;color:#d0d0d0;font-family:'Liberation Serif',serif">T</div><div class="t" style="left:138px;top:548px;font-size:10px;color:#cfcfcf;font-weight:bold">ةيئاسنلا تاقلحلاو رودلا</div><svg class="a" style="left:405px;top:545px" width="120" height="15" viewBox="405 545 120 15"><rect x="408" y="546" width="11" height="13" fill="#252525"/><rect x="421" y="546" width="11" height="13" fill="#252525"/><rect x="434" y="546" width="11" height="13" fill="#252525"/><rect x="447" y="546" width="11" height="13" fill="#2a2a2a"/><rect x="473" y="546" width="12" height="13" fill="#252525"/><rect x="487" y="546" width="11" height="13" fill="#252525"/><rect x="500" y="546" width="11" height="13" fill="#252525"/><path d="M410 554Q410 548 414 548Q418 548 418 554Z" fill="#c8c8c8"/><path d="M411 551.5H417 M414 551V556" stroke="#262626" stroke-width="1"/><path d="M408.5 555.5H419.5" stroke="#c8c8c8" stroke-width="1.1"/><path d="M414 554V557" stroke="#c8c8c8" stroke-width="1.1"/><circle cx="426.5" cy="552.5" r="1.8" fill="none" stroke="#a8a8a8" stroke-width="1"/><path d="M429.3 552.5L431.0 551" stroke="#a8a8a8" stroke-width=".9"/><path d="M428.5 554.5L429.7 555.7" stroke="#a8a8a8" stroke-width=".9"/><path d="M426.5 555.3L426.5 555.5" stroke="#a8a8a8" stroke-width=".9"/><path d="M424.5 554.5L423.3 555.7" stroke="#a8a8a8" stroke-width=".9"/><path d="M423.7 552.5L422.0 551" stroke="#a8a8a8" stroke-width=".9"/><path d="M424.5 550.5L423.3 549.3" stroke="#a8a8a8" stroke-width=".9"/><path d="M426.5 549.7L426.5 548.0" stroke="#a8a8a8" stroke-width=".9"/><path d="M428.5 550.5L429.7 549.3" stroke="#a8a8a8" stroke-width=".9"/><path d="M436 557L444 548" stroke="#c8c8c8" stroke-width="1.3"/><text x="447.5" y="556.5" font-family="Liberation Serif" font-style="italic" font-size="12" fill="#bdbdbd">fx</text><g transform="rotate(40 479 552)"><ellipse cx="479" cy="555" rx="5" ry="3" fill="#2a2a2a" stroke="#bbb" stroke-width=".9"/><ellipse cx="479" cy="553" rx="5" ry="3" fill="#2a2a2a" stroke="#bbb" stroke-width=".9"/><ellipse cx="479" cy="550" rx="5" ry="4" fill="#777" stroke="#bbb" stroke-width=".9"/></g></svg><div class="a" style="left:527px;top:547px;width:50px;height:12px;background:#1d1d1d"></div><div class="t" style="left:532px;top:549px;font-size:10px;color:#c8c8c8">Normal</div><svg class="a" style="left:568px;top:550px" width="8" height="6"><path d="M1 1L4 4L7 1" stroke="#bbb" fill="none" stroke-width="1.1"/></svg><div class="a" style="left:583px;top:547px;width:11px;height:12px;background:#242424"></div><div class="a" style="left:599px;top:547px;width:47px;height:12px;background:#1d1d1d"></div><div class="t" style="left:604px;top:549px;font-size:10px;color:#c8c8c8">None</div><svg class="a" style="left:635px;top:550px" width="8" height="6"><path d="M1 1L4 4L7 1" stroke="#bbb" fill="none" stroke-width="1.1"/></svg><svg class="a" style="left:654px;top:547px" width="12" height="12"><path d="M6 6.5Q7.5 5 6 4Q3.5 4 3.5 6.5Q3.5 9.5 6.5 9.5Q10 9.5 10 6Q10 1.5 6 1.5Q1.5 1.5 1.5 6.5" stroke="#bbb" fill="none" stroke-width="1.1"/></svg><div class="a" style="left:671px;top:547px;width:78px;height:12px;background:#1d1d1d"></div><div class="t" style="left:677px;top:549px;font-size:10px;color:#c8c8c8">None</div><svg class="a" style="left:738px;top:550px" width="8" height="6"><path d="M1 1L4 4L7 1" stroke="#bbb" fill="none" stroke-width="1.1"/></svg><div class="a" style="left:0;top:560px;width:767px;height:14px;background:#262626"></div><div class="a" style="left:0;top:574px;width:767px;height:1px;background:#1c1c1c"></div><svg class="a" style="left:0;top:560px" width="140" height="15"><path d="M11 3.5L6.5 7.5L11 11.5Z" fill="#bbb"/><path d="M23.5 4L27 7.5L23.5 11L20 7.5Z" stroke="#aaa" fill="none"/><path d="M35 3.5L39 7.5L35 11.5Z" fill="#555"/><rect x="106" y="1" width="14" height="13" fill="#1f1f1f"/><circle cx="113" cy="8.5" r="4.3" stroke="#2d8ceb" stroke-width="1.3" fill="none"/><path d="M113 6V8.5L115 10 M111.5 2.5H114.5 M113 2.5V4" stroke="#2d8ceb" stroke-width="1.1" fill="none"/><path d="M124 3V12H134 M125 10L128 6L130 9L133 5" stroke="#bbb" fill="none" stroke-width="1"/></svg><div class="t" style="left:141px;top:563px;font-size:10.5px;color:#c8c8c8">Position</div><div class="t" style="left:408px;top:563px;font-size:10px;color:#2d8ceb">994.0 ,236.0</div><div class="a" style="left:0;top:575px;width:767px;height:14px;background:#2a2a2a"></div><div class="a" style="left:0;top:589px;width:767px;height:1px;background:#1c1c1c"></div><div class="a" style="left:5px;top:576px;width:12px;height:12px;background:#1f1f1f"></div><svg class="a" style="left:5px;top:576px" width="12" height="12"><path d="M1 6Q6 0 11 6Q6 12 1 6Z" fill="#c8c8c8"/><circle cx="6" cy="6" r="1.8" fill="#1f1f1f"/></svg><div class="a" style="left:32px;top:576px;width:11px;height:12px;background:#222"></div><div class="a" style="left:45px;top:576px;width:11px;height:12px;background:#222"></div><svg class="a" style="left:65px;top:579px" width="9" height="8"><path d="M0 0H8L4 7Z" fill="#bdbdbd"/></svg><div class="a" style="left:76px;top:578px;width:11px;height:10px;background:#bfa77e"></div><div class="t" style="left:95px;top:579px;font-size:10px;color:#c0c0c0">6</div><svg class="a" style="left:120px;top:578px" width="15" height="13" viewBox="0 0 15 13"><rect x="0" y="0" width="15" height="13" fill="#d8d8d8"/><rect x="2.5" y="1.5" width="10" height="10" fill="#444"/><g fill="#333"><rect x="0.6" y="1.5" width="1.2" height="1.5"/><rect x="0.6" y="5.5" width="1.2" height="1.5"/><rect x="0.6" y="9.5" width="1.2" height="1.5"/><rect x="13.2" y="1.5" width="1.2" height="1.5"/><rect x="13.2" y="5.5" width="1.2" height="1.5"/><rect x="13.2" y="9.5" width="1.2" height="1.5"/></g><circle cx="6" cy="5" r="2.2" fill="#3d8de0"/><path d="M8 4L12 7L8.5 10Z" fill="#e04a30"/><path d="M4.5 10.5L6.8 7L9 10.5Z" fill="#3cb040"/></svg><div class="t" style="left:138px;top:578px;font-size:10px;color:#cfcfcf;font-weight:bold">[Pre-comp 3]</div><svg class="a" style="left:405px;top:575px" width="120" height="15" viewBox="405 575 120 15"><rect x="408" y="576" width="11" height="13" fill="#252525"/><rect x="421" y="576" width="11" height="13" fill="#252525"/><rect x="434" y="576" width="11" height="13" fill="#252525"/><rect x="447" y="576" width="11" height="13" fill="#2a2a2a"/><rect x="473" y="576" width="12" height="13" fill="#252525"/><rect x="487" y="576" width="11" height="13" fill="#252525"/><rect x="500" y="576" width="11" height="13" fill="#252525"/><path d="M410 584Q410 578 414 578Q418 578 418 584Z" fill="#c8c8c8"/><path d="M411 581.5H417 M414 581V586" stroke="#262626" stroke-width="1"/><path d="M408.5 585.5H419.5" stroke="#c8c8c8" stroke-width="1.1"/><path d="M414 584V587" stroke="#c8c8c8" stroke-width="1.1"/><rect x="421" y="576" width="11" height="13" fill="#1c1c1c"/><path d="M436 587L444 578" stroke="#c8c8c8" stroke-width="1.3"/><g transform="rotate(40 479 582)"><ellipse cx="479" cy="585" rx="5" ry="3" fill="#2a2a2a" stroke="#bbb" stroke-width=".9"/><ellipse cx="479" cy="583" rx="5" ry="3" fill="#2a2a2a" stroke="#bbb" stroke-width=".9"/><ellipse cx="479" cy="580" rx="5" ry="4" fill="#777" stroke="#bbb" stroke-width=".9"/></g></svg><div class="a" style="left:527px;top:577px;width:50px;height:12px;background:#1d1d1d"></div><div class="t" style="left:532px;top:579px;font-size:10px;color:#c8c8c8">Normal</div><svg class="a" style="left:568px;top:580px" width="8" height="6"><path d="M1 1L4 4L7 1" stroke="#bbb" fill="none" stroke-width="1.1"/></svg><div class="a" style="left:583px;top:577px;width:11px;height:12px;background:#242424"></div><div class="a" style="left:599px;top:577px;width:47px;height:12px;background:#1d1d1d"></div><div class="t" style="left:604px;top:579px;font-size:10px;color:#c8c8c8">None</div><svg class="a" style="left:635px;top:580px" width="8" height="6"><path d="M1 1L4 4L7 1" stroke="#bbb" fill="none" stroke-width="1.1"/></svg><svg class="a" style="left:654px;top:577px" width="12" height="12"><path d="M6 6.5Q7.5 5 6 4Q3.5 4 3.5 6.5Q3.5 9.5 6.5 9.5Q10 9.5 10 6Q10 1.5 6 1.5Q1.5 1.5 1.5 6.5" stroke="#bbb" fill="none" stroke-width="1.1"/></svg><div class="a" style="left:671px;top:577px;width:78px;height:12px;background:#1d1d1d"></div><div class="t" style="left:677px;top:579px;font-size:10px;color:#c8c8c8">None</div><svg class="a" style="left:738px;top:580px" width="8" height="6"><path d="M1 1L4 4L7 1" stroke="#bbb" fill="none" stroke-width="1.1"/></svg><div class="a" style="left:0;top:590px;width:767px;height:14px;background:#262626"></div><div class="a" style="left:0;top:604px;width:767px;height:1px;background:#1c1c1c"></div><svg class="a" style="left:0;top:590px" width="140" height="15"><path d="M11 3.5L6.5 7.5L11 11.5Z" fill="#bbb"/><path d="M23.5 4L27 7.5L23.5 11L20 7.5Z" stroke="#aaa" fill="none"/><path d="M35 3.5L39 7.5L35 11.5Z" fill="#555"/><rect x="106" y="1" width="14" height="13" fill="#1f1f1f"/><circle cx="113" cy="8.5" r="4.3" stroke="#2d8ceb" stroke-width="1.3" fill="none"/><path d="M113 6V8.5L115 10 M111.5 2.5H114.5 M113 2.5V4" stroke="#2d8ceb" stroke-width="1.1" fill="none"/><path d="M124 3V12H134 M125 10L128 6L130 9L133 5" stroke="#bbb" fill="none" stroke-width="1"/></svg><div class="t" style="left:141px;top:593px;font-size:10.5px;color:#c8c8c8">Position</div><div class="t" style="left:408px;top:593px;font-size:10px;color:#2d8ceb">308.0 ,114.0</div><div class="a" style="left:0;top:605px;width:767px;height:14px;background:#2a2a2a"></div><div class="a" style="left:0;top:619px;width:767px;height:1px;background:#1c1c1c"></div><div class="a" style="left:5px;top:606px;width:12px;height:12px;background:#1f1f1f"></div><svg class="a" style="left:5px;top:606px" width="12" height="12"><path d="M1 6Q6 0 11 6Q6 12 1 6Z" fill="#c8c8c8"/><circle cx="6" cy="6" r="1.8" fill="#1f1f1f"/></svg><div class="a" style="left:32px;top:606px;width:11px;height:12px;background:#222"></div><div class="a" style="left:45px;top:606px;width:11px;height:12px;background:#222"></div><svg class="a" style="left:65px;top:608px" width="8" height="9"><path d="M0 0L7 4.5L0 9Z" fill="#bdbdbd"/></svg><div class="a" style="left:76px;top:608px;width:11px;height:10px;background:#a9a9d0"></div><div class="t" style="left:95px;top:609px;font-size:10px;color:#c0c0c0">7</div><div class="a" style="left:121px;top:608px;width:11px;height:9px;background:#f0e0b0"></div><div class="a" style="left:122px;top:609px;width:6px;height:5px;background:#d03020"></div><div class="a" style="left:127px;top:612px;width:4px;height:4px;background:#e8a020"></div><div class="t" style="left:138px;top:608px;font-size:10px;color:#cfcfcf;font-weight:bold">[بنت شمال.png]</div><svg class="a" style="left:405px;top:605px" width="120" height="15" viewBox="405 605 120 15"><rect x="408" y="606" width="11" height="13" fill="#252525"/><rect x="421" y="606" width="11" height="13" fill="#252525"/><rect x="434" y="606" width="11" height="13" fill="#252525"/><rect x="447" y="606" width="11" height="13" fill="#2a2a2a"/><rect x="473" y="606" width="12" height="13" fill="#252525"/><rect x="487" y="606" width="11" height="13" fill="#252525"/><rect x="500" y="606" width="11" height="13" fill="#252525"/><path d="M410 614Q410 608 414 608Q418 608 418 614Z" fill="#c8c8c8"/><path d="M411 611.5H417 M414 611V616" stroke="#262626" stroke-width="1"/><path d="M408.5 615.5H419.5" stroke="#c8c8c8" stroke-width="1.1"/><path d="M414 614V617" stroke="#c8c8c8" stroke-width="1.1"/><path d="M436 617L444 608" stroke="#c8c8c8" stroke-width="1.3"/><text x="447.5" y="616.5" font-family="Liberation Serif" font-style="italic" font-size="12" fill="#bdbdbd">fx</text><g transform="rotate(40 479 612)"><ellipse cx="479" cy="615" rx="5" ry="3" fill="#2a2a2a" stroke="#bbb" stroke-width=".9"/><ellipse cx="479" cy="613" rx="5" ry="3" fill="#2a2a2a" stroke="#bbb" stroke-width=".9"/><ellipse cx="479" cy="610" rx="5" ry="4" fill="#777" stroke="#bbb" stroke-width=".9"/></g></svg><div class="a" style="left:527px;top:607px;width:50px;height:12px;background:#1d1d1d"></div><div class="t" style="left:532px;top:609px;font-size:10px;color:#c8c8c8">Normal</div><svg class="a" style="left:568px;top:610px" width="8" height="6"><path d="M1 1L4 4L7 1" stroke="#bbb" fill="none" stroke-width="1.1"/></svg><div class="a" style="left:583px;top:607px;width:11px;height:12px;background:#242424"></div><div class="a" style="left:599px;top:607px;width:47px;height:12px;background:#1d1d1d"></div><div class="t" style="left:604px;top:609px;font-size:10px;color:#c8c8c8">None</div><svg class="a" style="left:635px;top:610px" width="8" height="6"><path d="M1 1L4 4L7 1" stroke="#bbb" fill="none" stroke-width="1.1"/></svg><svg class="a" style="left:654px;top:607px" width="12" height="12"><path d="M6 6.5Q7.5 5 6 4Q3.5 4 3.5 6.5Q3.5 9.5 6.5 9.5Q10 9.5 10 6Q10 1.5 6 1.5Q1.5 1.5 1.5 6.5" stroke="#bbb" fill="none" stroke-width="1.1"/></svg><div class="a" style="left:671px;top:607px;width:78px;height:12px;background:#1d1d1d"></div><div class="t" style="left:677px;top:609px;font-size:10px;color:#c8c8c8">None</div><svg class="a" style="left:738px;top:610px" width="8" height="6"><path d="M1 1L4 4L7 1" stroke="#bbb" fill="none" stroke-width="1.1"/></svg><div class="a" style="left:0;top:620px;width:767px;height:3px;background:#2a2a2a"></div><div class="a" style="left:135px;top:621px;width:268px;height:2px;background:#bdbdbd"></div>

<!-- ===== TIMELINE GRAPH ===== -->
<div class="a" style="left:767px;top:437px;width:1px;height:186px;background:#141414"></div>
<svg class="a" style="left:768px;top:437px" width="432" height="186" viewBox="768 437 432 186">
 <rect x="768" y="443" width="415" height="7" fill="#6c6c6c"/>
 <path d="M773 443V450H770Q768 450 768 446.5Q768 443 770 443Z" fill="#2d8ceb"/>
 <path d="M1178 443V450H1181Q1183 450 1183 446.5Q1183 443 1181 443Z" fill="#2d8ceb"/>
 <path d="M1103.5 443V450" stroke="#2d8ceb" stroke-width="1.2"/>
 <g stroke="#bbb" stroke-width="1"><path d="M774.5 462V467 M874.5 462V467 M974 462V467 M1074 462V467 M1173.5 462V467"/></g>
 <rect x="768" y="467" width="432" height="1" fill="#141414"/>
 <rect x="768" y="468.5" width="415" height="13" fill="#636363"/>
 <rect x="772" y="474" width="406" height="1" fill="none" stroke="#777" stroke-dasharray="1 3"/>
 <path d="M773 468.5V481.5H770Q768 481.5 768 475Q768 468.5 770 468.5Z" fill="#2d8ceb"/>
 <path d="M1178 468.5V481.5H1181Q1183 481.5 1183 475Q1183 468.5 1181 468.5Z" fill="#2d8ceb"/>
 <rect x="768" y="482" width="432" height="3" fill="#1c1c1c"/>
 <rect x="816.5" y="483.5" width="2" height="1.5" fill="#2d6fd0"/><rect x="829.5" y="483.5" width="1.5" height="1.5" fill="#2d6fd0"/><rect x="833.5" y="483" width="22" height="2" fill="#2d6fd0"/><rect x="899.5" y="483.5" width="1.5" height="1.5" fill="#2d6fd0"/>
 <path d="M1187 471H1197V480L1192 484L1187 480Z" fill="#aaa"/>
<rect x="768" y="485" width="415" height="15" fill="#333"/><rect x="773" y="485" width="404" height="15" fill="#3a3a3a"/><rect x="1032" y="486" width="151" height="14" fill="#7a3a3a"/><rect x="1075" y="487.5" width="33" height="10" fill="#d4c0ae" stroke="#2a2020" stroke-width=".8"/><text x="1079" y="496" font-family="Liberation Sans" font-size="9.5" letter-spacing=".4" fill="#333">TR In</text><path d="M1070 500V496L1074 493L1078 496V500Z" fill="#c8c8c8" stroke="#444" stroke-width=".6"/><rect x="768" y="499.5" width="415" height="0.8" fill="#262626"/><rect x="768" y="500" width="415" height="15" fill="#333"/><rect x="773" y="500" width="404" height="15" fill="#3a3a3a"/><rect x="914" y="501" width="240" height="14" fill="#7a3a3a"/><rect x="957" y="502.5" width="33" height="10" fill="#d4c0ae" stroke="#2a2020" stroke-width=".8"/><text x="961" y="511" font-family="Liberation Sans" font-size="9.5" letter-spacing=".4" fill="#333">TR In</text><path d="M952 515V511L956 508L960 511V515Z" fill="#c8c8c8" stroke="#444" stroke-width=".6"/><rect x="768" y="514.5" width="415" height="0.8" fill="#262626"/><rect x="768" y="515" width="415" height="15" fill="#333"/><rect x="773" y="515" width="404" height="15" fill="#3a3a3a"/><rect x="865" y="516" width="312" height="14" fill="#777787"/><rect x="878" y="517.5" width="33" height="10" fill="#d6d4da" stroke="#2a2020" stroke-width=".8"/><text x="882" y="526" font-family="Liberation Sans" font-size="9.5" letter-spacing=".4" fill="#333">TR In</text><path d="M873 530V526L877 523L881 526V530Z" fill="#c8c8c8" stroke="#444" stroke-width=".6"/><rect x="768" y="529.5" width="415" height="0.8" fill="#262626"/><rect x="768" y="530" width="415" height="15" fill="#333"/><rect x="773" y="530" width="404" height="15" fill="#3a3a3a"/><rect x="866" y="531" width="304" height="14" fill="#7a3a3a"/><rect x="885" y="532.5" width="33" height="10" fill="#d4c0ae" stroke="#2a2020" stroke-width=".8"/><text x="889" y="541" font-family="Liberation Sans" font-size="9.5" letter-spacing=".4" fill="#333">TR In</text><path d="M880 545V541L884 538L888 541V545Z" fill="#c8c8c8" stroke="#444" stroke-width=".6"/><rect x="768" y="544.5" width="415" height="0.8" fill="#262626"/><rect x="768" y="545" width="415" height="15" fill="#333"/><rect x="773" y="545" width="404" height="15" fill="#3a3a3a"/><rect x="820" y="546" width="363" height="14" fill="#7a3a3a"/><rect x="835" y="547.5" width="33" height="10" fill="#d4c0ae" stroke="#2a2020" stroke-width=".8"/><text x="839" y="556" font-family="Liberation Sans" font-size="9.5" letter-spacing=".4" fill="#333">TR In</text><path d="M830 560V556L834 553L838 556V560Z" fill="#c8c8c8" stroke="#444" stroke-width=".6"/><rect x="768" y="559.5" width="415" height="0.8" fill="#262626"/><rect x="768" y="560" width="415" height="15" fill="#2c2c2c"/><rect x="773" y="560" width="404" height="15" fill="#333"/><path d="M854 564H861L859 567.5L861 571H854L856 567.5Z M872 564H879L877 567.5L879 571H872L874 567.5Z" fill="#c8c8c8"/><rect x="768" y="574.5" width="415" height="0.8" fill="#262626"/><rect x="768" y="575" width="415" height="15" fill="#333"/><rect x="773" y="575" width="404" height="15" fill="#3a3a3a"/><rect x="811" y="576" width="372" height="14" fill="#6f6554"/><rect x="768" y="589.5" width="415" height="0.8" fill="#262626"/><rect x="768" y="590" width="415" height="15" fill="#2c2c2c"/><rect x="773" y="590" width="404" height="15" fill="#333"/><path d="M854 594H861L859 597.5L861 601H854L856 597.5Z M872 594H879L877 597.5L879 601H872L874 597.5Z" fill="#c8c8c8"/><rect x="768" y="604.5" width="415" height="0.8" fill="#262626"/><rect x="768" y="605" width="415" height="15" fill="#333"/><rect x="773" y="605" width="404" height="15" fill="#3a3a3a"/><rect x="1033" y="606" width="150" height="14" fill="#777787"/><rect x="1047" y="607.5" width="33" height="10" fill="#d6d4da" stroke="#2a2020" stroke-width=".8"/><text x="1051" y="616" font-family="Liberation Sans" font-size="9.5" letter-spacing=".4" fill="#333">TR In</text><path d="M1042 620V616L1046 613L1050 616V620Z" fill="#c8c8c8" stroke="#444" stroke-width=".6"/><rect x="768" y="619.5" width="415" height="0.8" fill="#262626"/><rect x="768" y="620" width="415" height="3" fill="#2e2e2e"/><rect x="919" y="620" width="264" height="2" fill="#b8b8d0"/><path d="M809 575V590" stroke="none"/><path d="M811 577L814 580V577Z" fill="#222"/><path d="M1103.5 455V623" stroke="#2d8ceb" stroke-width="1.3"/><path d="M1097 456H1110V463L1103.5 467L1097 463Z" fill="#2d8ceb"/><path d="M1103.5 458V466" stroke="#102040"/><rect x="1184" y="485" width="16" height="138" fill="#262626"/><path d="M1188 494L1192 490H1197V498H1192Z" stroke="#bbb" fill="none" stroke-width="1.2"/><circle cx="1192" cy="497" r="2.5" stroke="#bbb" fill="#262626" stroke-width="1.2"/><rect x="1185" y="501" width="12" height="66" rx="6" fill="#333"/></svg>
<div class="t" style="left:769px;top:454px;font-size:9px;color:#aaa">):00s</div>
<div class="t" style="left:866px;top:454px;font-size:9px;color:#aaa">05s</div>
<div class="t" style="left:966px;top:454px;font-size:9px;color:#aaa">10s</div>
<div class="t" style="left:1066px;top:454px;font-size:9px;color:#aaa">15s</div>
<div class="t" style="left:1165px;top:454px;font-size:9px;color:#aaa">20s</div>
<!-- bottom bar -->
<div class="a" style="left:0;top:623px;width:1200px;height:16px;background:#232323"></div>
<div class="a" style="left:0;top:623px;width:1200px;height:1px;background:#181818"></div>
<svg class="a" style="left:0;top:623px" width="1200" height="16" viewBox="0 623 1200 16">
 <rect x="4" y="625" width="14" height="12" fill="#262626"/><rect x="20" y="625" width="14" height="12" fill="#262626"/>
 <g stroke="#2d8ceb" fill="none" stroke-width="1.1"><rect x="7" y="627" width="6" height="7" rx="1"/><rect x="10" y="630" width="6" height="6" rx="1"/><circle cx="26" cy="630" r="3.5"/><circle cx="29" cy="633" r="3.5"/></g>
 <path d="M39 627H43L42 631L43 635H39L40 631Z" fill="#bbb"/>
 <path d="M773 633L776.5 629L780 633Z" fill="#ccc"/>
 <path d="M800 631H833" stroke="#555"/><circle cx="795" cy="631" r="3.5" fill="#232323" stroke="#ccc" stroke-width="1.3"/>
 <path d="M843 634L848 628L851 631L853 629L857 634Z" fill="#ccc"/>
</svg>

<!-- taskbar -->

<svg class="a" style="left:0;top:639px" width="1200" height="36" viewBox="0 639 1200 36">
 <rect x="0" y="639" width="1200" height="36" fill="#0a1118"/>
 <!-- windows -->
 <path d="M14 651.5L20 650.5V656.5H14Z M21 650.3L28 649.2V656.5H21Z M14 657.5H20V663.5L14 662.5Z M21 657.5H28V664.8L21 663.7Z" fill="#fff"/>
 <!-- search -->
 <circle cx="65" cy="654.5" r="4.5" stroke="#fff" stroke-width="1.3" fill="none"/><path d="M61.8 657.8L57 662.5" stroke="#fff" stroke-width="1.5"/>
 <!-- task view -->
 <rect x="100" y="650.5" width="10" height="13" stroke="#fff" stroke-width="1.3" fill="none" rx="1"/><path d="M97 653V661 M113 653V661" stroke="#fff" stroke-width="1.2"/>
 <!-- explorer -->
 <path d="M141 651H148L150 653H159V665H141Z" fill="#f2cc6b"/><rect x="141" y="654" width="18" height="11" fill="#f8dc8a"/><path d="M146 665V660H154V665" stroke="#1e88e5" stroke-width="2" fill="none"/>
 <rect x="133" y="673" width="35" height="2" fill="#9dc8e8"/>
 <!-- app2 -->
 <path d="M186 663L192 649L203 652L198 665Z" fill="#9bbbe0"/><path d="M186 663L192 649L196 650L190 664Z" fill="#5478b0"/>
 <rect x="176" y="673" width="35" height="2" fill="#9dc8e8"/>
 <!-- quicktime -->
 <circle cx="236" cy="656" r="6.5" stroke="#2196f3" stroke-width="3" fill="none"/><path d="M238 658L244 664" stroke="#2196f3" stroke-width="3"/><path d="M235 653L239 656L235 659Z" fill="#2196f3"/>
 <!-- mail -->
 <rect x="269" y="651" width="21" height="14" fill="#fff"/><path d="M269 651L279.5 658L290 651" stroke="#0a1118" stroke-width="1.5" fill="none"/><path d="M279 658L290 665" stroke="#0a1118" stroke-width="1.3"/>
 <!-- ae -->
 <rect x="312" y="648" width="19" height="18" fill="#1d1a3a" stroke="#9a7dde" stroke-width="1.2"/>
 <text x="314.5" y="661" font-family="Liberation Sans" font-size="10" fill="#c8a8f8">Ae</text>
 <rect x="305" y="673" width="35" height="2" fill="#9dc8e8"/>
 <!-- store -->
 <rect x="345" y="639" width="41" height="36" fill="#b5622a"/>
 <path d="M357 652H375L374 665H358Z" fill="#fff"/><path d="M362 652V649.5Q366 646 370 649.5V652" stroke="#fff" stroke-width="1.5" fill="none"/>
 <rect x="361.5" y="655" width="3.5" height="3.5" fill="#b5622a"/><rect x="366.5" y="655" width="3.5" height="3.5" fill="#b5622a"/><rect x="361.5" y="659.5" width="3.5" height="3.5" fill="#b5622a"/><rect x="366.5" y="659.5" width="3.5" height="3.5" fill="#b5622a"/>
 <!-- camtasia -->
 <rect x="398" y="648" width="21" height="18" fill="#2f9e3a"/><path d="M413 653H405V661H413" stroke="#fff" stroke-width="2.2" fill="none"/>
 <!-- photos -->
 <rect x="485" y="650" width="20" height="14" fill="#8ab4d8"/><path d="M485 661L491 655L497 660L501 657L505 661V664H485Z" fill="#2c5a8a"/>
 <rect x="477" y="673" width="35" height="2" fill="#9dc8e8"/>
 <!-- ps -->
 <rect x="528" y="648" width="21" height="18" fill="#0f2a4a" stroke="#31a8ff" stroke-width="1"/>
 <text x="530.5" y="661" font-family="Liberation Sans" font-size="10" fill="#31a8ff">Ps</text>
 <!-- chrome -->
 <circle cx="581" cy="657" r="9.5" fill="#db4437"/><path d="M581 657L589.2 661.8A9.5 9.5 0 0 1 571.8 661.8Z" fill="#0f9d58"/><path d="M581 657L572.8 661.8A9.5 9.5 0 0 1 581 647.5Z" fill="#db4437"/><path d="M581 647.5A9.5 9.5 0 0 1 589.2 661.8L581 657Z" fill="#f4b400"/>
 <circle cx="581" cy="657" r="4.3" fill="#fff"/><circle cx="581" cy="657" r="3.3" fill="#4285f4"/>
 <rect x="563" y="673" width="35" height="2" fill="#9dc8e8"/>
 <!-- tray -->
 <path d="M1015 661L1020 656L1025 661" stroke="#fff" stroke-width="1.2" fill="none"/>
 <rect x="1036" y="655" width="11" height="7" stroke="#fff" fill="none"/><rect x="1038" y="657" width="6" height="3" fill="#fff"/><path d="M1034 652V656 M1037 652V656" stroke="#fff"/>
 <path d="M1056 655H1059L1063 651.5V664.5L1059 661H1056Z" stroke="#fff" fill="none"/><path d="M1065 655Q1067 658 1065 661 M1067 653Q1070 658 1067 663" stroke="#fff" fill="none"/>
 <path d="M1164.5 650.5H1178V661.5H1173L1170.5 664L1168 661.5H1164.5Z" stroke="#eee" stroke-width="1.2" fill="none"/><rect x="1195" y="639" width="2" height="36" fill="#3a3f44"/>
</svg>
<div class="t" style="left:1085px;top:651px;font-size:12px;color:#fff">ع</div>
<div class="t" style="left:1111px;top:645px;font-size:11px;color:#e8e8e8">06:16 م</div>
<div class="t" style="left:1111px;top:661px;font-size:11px;color:#e8e8e8;unicode-bidi:bidi-override;direction:ltr">٣٩/٠١/١٥</div>

</body></html>
